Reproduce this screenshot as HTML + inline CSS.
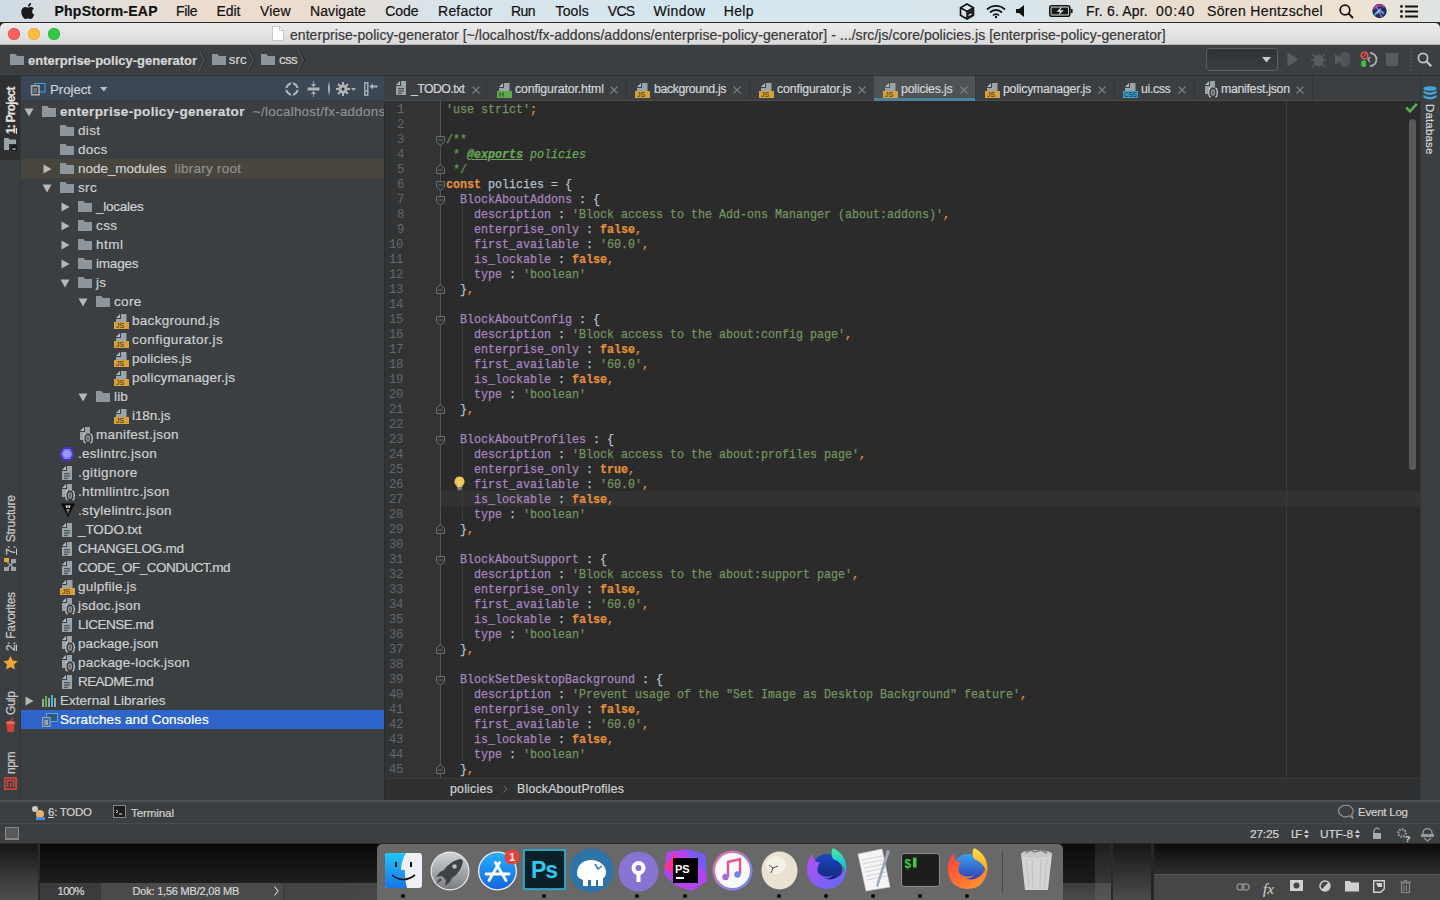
<!DOCTYPE html>
<html><head><meta charset="utf-8">
<style>
*{margin:0;padding:0;box-sizing:border-box}
html,body{width:1440px;height:900px;overflow:hidden;background:#2b2b2b;font-family:"Liberation Sans",sans-serif}
.a{position:absolute;white-space:pre}
svg.a{overflow:visible}
.k{color:#e28e3c;font-weight:bold}
.s{color:#74955f}
.p{color:#a886bf}
.c{color:#69a55a;font-style:italic}
.o{color:#e28e3c}
.d{color:#b4c2d0}
</style></head><body>

<div class="a" style="left:0px;top:0px;width:1440px;height:22px;background:linear-gradient(90deg,#cddbe5 0%,#e2dfdb 7%,#eedccd 15%,#ebdcd0 22%,#d9e3ea 30%,#d5e6ee 50%,#d8e5ea 72%,#e8ddd0 80%,#ecdfcf 88%,#efe3d3 95%,#dde3e4 100%);"></div>
<svg class="a" style="left:21px;top:3px;" width="14" height="16" viewBox="0 0 14 16"><path d="M11.2 8.6c0-2 1.6-2.9 1.7-3-0.9-1.4-2.4-1.6-2.9-1.6-1.2-0.1-2.4 0.7-3 0.7-0.6 0-1.6-0.7-2.6-0.7C3 4 1.7 4.8 1 6.1c-1.4 2.4-0.4 6 1 8 0.7 1 1.4 2 2.5 2 1-0.1 1.4-0.6 2.6-0.6s1.5 0.6 2.6 0.6c1.1 0 1.8-1 2.4-2 0.8-1.1 1.1-2.2 1.1-2.3-0.1 0-2.1-0.8-2.1-3.2zM9.3 2.6c0.5-0.7 0.9-1.6 0.8-2.6-0.8 0-1.8 0.5-2.3 1.2-0.5 0.6-1 1.5-0.8 2.5 0.9 0.1 1.8-0.4 2.3-1.1z" fill="#1a1a1a"/></svg>
<div class="a" style="left:54.5px;top:4.15px;font-size:14px;line-height:14px;color:#111;font-family:'Liberation Sans',sans-serif;letter-spacing:0.242px;font-weight:bold;-webkit-text-stroke:0.2px currentColor;">PhpStorm-EAP</div>
<div class="a" style="left:176.0px;top:4.15px;font-size:14px;line-height:14px;color:#111;font-family:'Liberation Sans',sans-serif;letter-spacing:-0.353px;-webkit-text-stroke:0.2px currentColor;">File</div>
<div class="a" style="left:216.5px;top:4.15px;font-size:14px;line-height:14px;color:#111;font-family:'Liberation Sans',sans-serif;letter-spacing:-0.042px;-webkit-text-stroke:0.2px currentColor;">Edit</div>
<div class="a" style="left:260.0px;top:4.15px;font-size:14px;line-height:14px;color:#111;font-family:'Liberation Sans',sans-serif;letter-spacing:0.136px;-webkit-text-stroke:0.2px currentColor;">View</div>
<div class="a" style="left:310.0px;top:4.15px;font-size:14px;line-height:14px;color:#111;font-family:'Liberation Sans',sans-serif;letter-spacing:0.092px;-webkit-text-stroke:0.2px currentColor;">Navigate</div>
<div class="a" style="left:385.2px;top:4.15px;font-size:14px;line-height:14px;color:#111;font-family:'Liberation Sans',sans-serif;letter-spacing:-0.023px;-webkit-text-stroke:0.2px currentColor;">Code</div>
<div class="a" style="left:438.1px;top:4.15px;font-size:14px;line-height:14px;color:#111;font-family:'Liberation Sans',sans-serif;letter-spacing:0.184px;-webkit-text-stroke:0.2px currentColor;">Refactor</div>
<div class="a" style="left:511.1px;top:4.15px;font-size:14px;line-height:14px;color:#111;font-family:'Liberation Sans',sans-serif;letter-spacing:-0.592px;-webkit-text-stroke:0.2px currentColor;">Run</div>
<div class="a" style="left:555.5px;top:4.15px;font-size:14px;line-height:14px;color:#111;font-family:'Liberation Sans',sans-serif;letter-spacing:0.154px;-webkit-text-stroke:0.2px currentColor;">Tools</div>
<div class="a" style="left:607.8px;top:4.15px;font-size:14px;line-height:14px;color:#111;font-family:'Liberation Sans',sans-serif;letter-spacing:-0.694px;-webkit-text-stroke:0.2px currentColor;">VCS</div>
<div class="a" style="left:653.5px;top:4.15px;font-size:14px;line-height:14px;color:#111;font-family:'Liberation Sans',sans-serif;letter-spacing:0.381px;-webkit-text-stroke:0.2px currentColor;">Window</div>
<div class="a" style="left:723.8px;top:4.15px;font-size:14px;line-height:14px;color:#111;font-family:'Liberation Sans',sans-serif;letter-spacing:0.302px;-webkit-text-stroke:0.2px currentColor;">Help</div>
<div class="a" style="left:1086px;top:4.15px;font-size:14px;line-height:14px;color:#111;font-family:'Liberation Sans',sans-serif;letter-spacing:0.178px;-webkit-text-stroke:0.2px currentColor;">Fr. 6. Apr.</div>
<div class="a" style="left:1156px;top:4.15px;font-size:14px;line-height:14px;color:#111;font-family:'Liberation Sans',sans-serif;letter-spacing:0.816px;-webkit-text-stroke:0.2px currentColor;">00:40</div>
<div class="a" style="left:1207px;top:4.15px;font-size:14px;line-height:14px;color:#111;font-family:'Liberation Sans',sans-serif;letter-spacing:0.346px;-webkit-text-stroke:0.2px currentColor;">Sören Hentzschel</div>
<svg class="a" style="left:959px;top:3px;" width="16" height="17" viewBox="0 0 16 17"><path d="M8 1l6.5 3.7v7.6L8 16l-6.5-3.7V4.7z" fill="none" stroke="#111" stroke-width="1.6"/><path d="M1.5 4.7L8 8.4l6.5-3.7M8 8.4V16" fill="none" stroke="#111" stroke-width="1.6"/><path d="M8 8.4l6.5-3.7v7.6L8 16z" fill="#222"/><path d="M9.5 12.5l3-1.6" stroke="#d8e6ec" stroke-width="1.2"/></svg>
<svg class="a" style="left:986px;top:4px;" width="20" height="14" viewBox="0 0 20 14"><path d="M1 5.5a13 13 0 0 1 18 0" fill="none" stroke="#111" stroke-width="1.8"/><path d="M4 8.5a8.5 8.5 0 0 1 12 0" fill="none" stroke="#111" stroke-width="1.8"/><path d="M7 11.5a4 4 0 0 1 6 0" fill="none" stroke="#111" stroke-width="1.8"/><circle cx="10" cy="13" r="1.2" fill="#111"/></svg>
<svg class="a" style="left:1016px;top:5px;" width="10" height="12" viewBox="0 0 10 12"><path d="M0 4h3l5-4v12l-5-4h-3z" fill="#111"/></svg>
<svg class="a" style="left:1049px;top:5px;" width="24" height="12" viewBox="0 0 24 12"><rect x="0.8" y="0.8" width="20" height="10.4" rx="2" fill="none" stroke="#111" stroke-width="1.6"/><rect x="21.8" y="4" width="1.8" height="4" fill="#111"/><rect x="2.5" y="2.5" width="16.6" height="7" fill="#1a1a1a"/><path d="M12.5 1.8l-5 5h3.5l-1.5 3.6l5.2-5.2h-3.5l1.8-3.4z" fill="#d8e6ec"/></svg>
<svg class="a" style="left:1339px;top:4px;" width="15" height="15" viewBox="0 0 15 15"><circle cx="6" cy="6" r="4.8" fill="none" stroke="#111" stroke-width="1.7"/><path d="M9.5 9.5l4.5 4.5" stroke="#111" stroke-width="1.9"/></svg>
<svg class="a" style="left:1371px;top:2px;" width="17" height="17" viewBox="0 0 17 17"><circle cx="8.5" cy="9" r="8" fill="#fbf3e8"/><circle cx="8.5" cy="9" r="7.2" fill="#1c2040"/><path d="M2.5 7Q7 1 13.5 5" stroke="#e040b0" stroke-width="2.2" fill="none" opacity="0.9"/><path d="M3.5 13.5Q8 5 13 12" stroke="#50e0d0" stroke-width="1.6" fill="none"/><path d="M5 4.5Q9 9 10.5 15" stroke="#f070c8" stroke-width="1.3" fill="none"/><path d="M6 12L9.5 6.5" stroke="#e8f8ff" stroke-width="1.2"/><circle cx="8.5" cy="9" r="7.2" fill="#3050c0" opacity="0.25"/></svg>
<svg class="a" style="left:1400px;top:5px;" width="18" height="13" viewBox="0 0 18 13"><circle cx="1.5" cy="1.5" r="1.4" fill="#111"/><circle cx="1.5" cy="6.5" r="1.4" fill="#111"/><circle cx="1.5" cy="11.5" r="1.4" fill="#111"/><rect x="5" y="0.5" width="13" height="2" fill="#111"/><rect x="5" y="5.5" width="13" height="2" fill="#111"/><rect x="5" y="10.5" width="13" height="2" fill="#111"/></svg>
<div class="a" style="left:0px;top:22px;width:1440px;height:1px;background:#2a2a2a;"></div>
<div class="a" style="left:0px;top:23px;width:1440px;height:22px;background:linear-gradient(#ececec,#d9d9d9);border-radius:5px 5px 0 0"></div>
<div class="a" style="left:0px;top:44px;width:1440px;height:1px;background:#b9b9b9;"></div>
<div class="a" style="left:8px;top:28px;width:12px;height:12px;background:#fc605c;border-radius:50%;box-shadow:inset 0 0 0 0.5px #e0443e"></div>
<div class="a" style="left:28px;top:28px;width:12px;height:12px;background:#fdbc40;border-radius:50%;box-shadow:inset 0 0 0 0.5px #dea123"></div>
<div class="a" style="left:48px;top:28px;width:12px;height:12px;background:#34c84a;border-radius:50%;box-shadow:inset 0 0 0 0.5px #1dad2b"></div>
<svg class="a" style="left:272px;top:26px;" width="12" height="15" viewBox="0 0 12 15"><path d="M0.5 0.5h7l4 4v10h-11z" fill="#fff" stroke="#c8c8c8"/><path d="M7.5 0.5v4h4" fill="none" stroke="#c8c8c8"/></svg>
<div class="a" style="left:290px;top:27.65px;font-size:14px;line-height:14px;color:#383838;font-family:'Liberation Sans',sans-serif;letter-spacing:0.053px;-webkit-text-stroke:0.2px currentColor;">enterprise-policy-generator [~/localhost/fx-addons/addons/enterprise-policy-generator] - .../src/js/core/policies.js [enterprise-policy-generator]</div>
<div class="a" style="left:0px;top:45px;width:1440px;height:31px;background:#3c3f41;"></div>
<div class="a" style="left:0px;top:75px;width:1440px;height:1px;background:#2f3133;"></div>
<svg class="a" style="left:10px;top:54px;" width="15" height="12" viewBox="0 0 15 12"><path d="M0 0h5.5l1.5 2h7v9h-14z" fill="#8d969c"/></svg>
<div class="a" style="left:28px;top:53.50px;font-size:13px;line-height:13px;color:#d6d6d6;font-family:'Liberation Sans',sans-serif;letter-spacing:-0.002px;font-weight:bold;-webkit-text-stroke:0.2px currentColor;">enterprise-policy-generator</div>
<svg class="a" style="left:199px;top:50px;" width="6" height="20" viewBox="0 0 6 20"><path d="M1.5 0.5l5 9.5l-5 9.5" fill="none" stroke="#26282a" stroke-width="1.2"/><path d="M0.5 0.5l5 9.5l-5 9.5" fill="none" stroke="#5c6063" stroke-width="1"/></svg>
<svg class="a" style="left:212px;top:54px;" width="15" height="12" viewBox="0 0 15 12"><path d="M0 0h5.5l1.5 2h7v9h-14z" fill="#8d969c"/></svg>
<div class="a" style="left:228.7px;top:53.24px;font-size:13.3px;line-height:13.3px;color:#d6d6d6;font-family:'Liberation Sans',sans-serif;letter-spacing:0.135px;-webkit-text-stroke:0.2px currentColor;">src</div>
<svg class="a" style="left:248px;top:50px;" width="6" height="20" viewBox="0 0 6 20"><path d="M1.5 0.5l5 9.5l-5 9.5" fill="none" stroke="#26282a" stroke-width="1.2"/><path d="M0.5 0.5l5 9.5l-5 9.5" fill="none" stroke="#5c6063" stroke-width="1"/></svg>
<svg class="a" style="left:261px;top:54px;" width="15" height="12" viewBox="0 0 15 12"><path d="M0 0h5.5l1.5 2h7v9h-14z" fill="#8d969c"/></svg>
<div class="a" style="left:279px;top:53.24px;font-size:13.3px;line-height:13.3px;color:#d6d6d6;font-family:'Liberation Sans',sans-serif;letter-spacing:-0.625px;-webkit-text-stroke:0.2px currentColor;">css</div>
<svg class="a" style="left:298px;top:50px;" width="6" height="20" viewBox="0 0 6 20"><path d="M1.5 0.5l5 9.5l-5 9.5" fill="none" stroke="#26282a" stroke-width="1.2"/><path d="M0.5 0.5l5 9.5l-5 9.5" fill="none" stroke="#5c6063" stroke-width="1"/></svg>
<div class="a" style="left:1206px;top:48px;width:72px;height:23px;background:linear-gradient(#2f3133,#3b3e40);border:1px solid #5c5f62;border-radius:4px"></div>
<svg class="a" style="left:1262px;top:57px;" width="10" height="6" viewBox="0 0 10 6"><path d="M0 0h9l-4.5 5.5z" fill="#c8c8c8"/></svg>
<svg class="a" style="left:1287px;top:51px;" width="12" height="17" viewBox="0 0 12 17"><path d="M0.5 1.5l11 7l-11 7z" fill="#595c5e"/></svg>
<svg class="a" style="left:1311px;top:51px;" width="15" height="17" viewBox="0 0 15 17"><ellipse cx="7.5" cy="9.5" rx="5" ry="6" fill="#595c5e"/><path d="M1 3l3 3M14 3l-3 3M0 9h3M12 9h3M1 16l3-3M14 16l-3-3" stroke="#595c5e" stroke-width="1.3"/></svg>
<svg class="a" style="left:1335px;top:52px;" width="15" height="15" viewBox="0 0 15 15"><path d="M0 2l8 5.5l-8 5.5z" fill="#595c5e"/><rect x="5" y="0" width="10" height="15" fill="#595c5e" opacity="0.7" rx="5"/></svg>
<svg class="a" style="left:1360px;top:51px;" width="17" height="17" viewBox="0 0 17 17"><circle cx="4.5" cy="4.5" r="3.3" fill="none" stroke="#e0574f" stroke-width="1.5"/><path d="M2.5 6.5l4-4" stroke="#e0574f" stroke-width="1.3"/><path d="M1 12a3 3 0 0 1 5-2v5a3 3 0 0 1-5-3z" fill="#3ac24b"/><path d="M10 2a6 6 0 0 1 0 13" fill="none" stroke="#aaa" stroke-width="2"/><path d="M10 6l-2 2.5l2 2.5" fill="none" stroke="#aaa" stroke-width="1.5"/></svg>
<div class="a" style="left:1386px;top:53px;width:12px;height:13px;background:#595c5e;"></div>
<svg class="a" style="left:1410px;top:48px;" width="2" height="24" viewBox="0 0 2 24"><path d="M1 0v24" stroke="#6a6d6f" stroke-width="1" stroke-dasharray="1.5 2"/></svg>
<svg class="a" style="left:1417px;top:52px;" width="16" height="16" viewBox="0 0 16 16"><circle cx="6" cy="6" r="4.6" fill="none" stroke="#c2c2c2" stroke-width="1.8"/><path d="M9.3 9.3l5 5" stroke="#c2c2c2" stroke-width="2.3"/></svg>
<div class="a" style="left:0px;top:76px;width:20px;height:724px;background:#3c3f41;"></div>
<div class="a" style="left:20px;top:76px;width:1px;height:724px;background:#323436;"></div>
<div class="a" style="left:0px;top:76px;width:20px;height:84px;background:#2e3032;"></div>
<div class="a" style="left:5px;top:133.5px;transform-origin:0 0;transform:rotate(-90deg);font-size:12px;line-height:12px;color:#e0e0e0;letter-spacing:-0.799px;-webkit-text-stroke:0.2px currentColor"><b><u>1</u>: Project</b></div>
<svg class="a" style="left:4px;top:138px;" width="13" height="13" viewBox="0 0 13 13"><path d="M0 0h5v1.5h7v4.5H5v6H0z" fill="#9aa4ab"/><rect x="7" y="7" width="6" height="6" fill="#1b1b1b"/><rect x="8.5" y="10.5" width="3" height="1.2" fill="#ddd"/></svg>
<div class="a" style="left:5px;top:555px;transform-origin:0 0;transform:rotate(-90deg);font-size:12px;line-height:12px;color:#c8c8c8;letter-spacing:-0.184px;-webkit-text-stroke:0.2px currentColor"><u>7</u>: Structure</div>
<svg class="a" style="left:4px;top:558px;" width="13" height="14" viewBox="0 0 13 14"><rect x="0" y="0" width="5" height="4" fill="#e3a83a"/><rect x="7" y="1" width="5" height="4" fill="#9aa4ab"/><rect x="0" y="9" width="5" height="4" fill="#9aa4ab"/><rect x="7" y="9" width="5" height="4" fill="#9aa4ab"/><path d="M3 4l7 6M10 4l-7 6" stroke="#9aa4ab" stroke-width="1.2"/></svg>
<div class="a" style="left:5px;top:651px;transform-origin:0 0;transform:rotate(-90deg);font-size:12px;line-height:12px;color:#c8c8c8;letter-spacing:-0.336px;-webkit-text-stroke:0.2px currentColor"><u>2</u>: Favorites</div>
<svg class="a" style="left:3px;top:656px;" width="15" height="14" viewBox="0 0 15 14"><path d="M7.5 0l2.2 4.6l5 0.6l-3.7 3.4l1 5l-4.5-2.5l-4.5 2.5l1-5l-3.7-3.4l5-0.6z" fill="#f0a732"/></svg>
<div class="a" style="left:5px;top:715px;transform-origin:0 0;transform:rotate(-90deg);font-size:12px;line-height:12px;color:#c8c8c8;letter-spacing:-0.449px;-webkit-text-stroke:0.2px currentColor">Gulp</div>
<svg class="a" style="left:5px;top:718px;" width="11" height="15" viewBox="0 0 11 15"><path d="M1 4h9l-1.5 10h-6z" fill="#d8403a"/><path d="M5 4l3-4" stroke="#d8403a" stroke-width="1.2"/><ellipse cx="5.5" cy="4.5" rx="4.5" ry="1.5" fill="#e86a64"/></svg>
<div class="a" style="left:5px;top:773.5px;transform-origin:0 0;transform:rotate(-90deg);font-size:12px;line-height:12px;color:#c8c8c8;letter-spacing:-0.372px;-webkit-text-stroke:0.2px currentColor">npm</div>
<svg class="a" style="left:4px;top:777px;" width="13" height="13" viewBox="0 0 13 13"><rect x="0.9" y="0.9" width="11.2" height="11.2" fill="none" stroke="#c9473a" stroke-width="1.8"/><path d="M3.5 10V3.5h6V10M6.5 6v4" fill="none" stroke="#c9473a" stroke-width="1.6"/></svg>
<div class="a" style="left:21px;top:76px;width:363px;height:724px;background:#3c3f41;"></div>
<div class="a" style="left:21px;top:76px;width:363px;height:25px;background:#3b4755;"></div>
<div class="a" style="left:21px;top:100px;width:363px;height:1px;background:#343c45;"></div>
<svg class="a" style="left:30px;top:82px;" width="16" height="14" viewBox="0 0 16 14"><rect x="4.5" y="1.5" width="10.5" height="8.5" fill="#2c4a66" stroke="#4aa0d8" stroke-width="1"/><rect x="1.6" y="3.8" width="7.4" height="9" fill="#3b4755" stroke="#a8a8a8" stroke-width="1.6"/><rect x="3.5" y="6" width="3.5" height="5" fill="#707478"/></svg>
<div class="a" style="left:50px;top:82.74px;font-size:13.3px;line-height:13.3px;color:#cdd1d5;font-family:'Liberation Sans',sans-serif;letter-spacing:-0.066px;-webkit-text-stroke:0.2px currentColor;">Project</div>
<svg class="a" style="left:100px;top:87px;" width="8" height="5" viewBox="0 0 8 5"><path d="M0 0h7.5l-3.75 4.5z" fill="#bcbcbc"/></svg>
<svg class="a" style="left:285px;top:82px;" width="14" height="14" viewBox="0 0 14 14"><circle cx="7" cy="7" r="5.6" fill="none" stroke="#b0b3b6" stroke-width="2.2"/><rect x="6" y="0.5" width="2" height="3.5" fill="#3b4755"/><rect x="6" y="10" width="2" height="3.5" fill="#3b4755"/><rect x="0.5" y="6" width="3.5" height="2" fill="#3b4755"/><rect x="10" y="6" width="3.5" height="2" fill="#3b4755"/></svg>
<svg class="a" style="left:307px;top:81px;" width="13" height="16" viewBox="0 0 13 16"><rect x="0.5" y="6.5" width="12" height="3" fill="#b0b3b6"/><path d="M6.5 0v3M4.5 3.5h4l-2 2z" fill="#b0b3b6" stroke="#b0b3b6" stroke-width="0.8"/><path d="M6.5 16v-3M4.5 12.5h4l-2-2z" fill="#b0b3b6" stroke="#b0b3b6" stroke-width="0.8"/></svg>
<div class="a" style="left:328px;top:81px;width:1.5px;height:15px;background:linear-gradient(#3b4755,#aab0b5 40%,#aab0b5 60%,#3b4755);"></div>
<svg class="a" style="left:336px;top:82px;" width="20" height="14" viewBox="0 0 20 14"><rect x="6" y="0" width="2" height="14" fill="#b0b3b6" transform="rotate(0 7 7)"/><rect x="6" y="0" width="2" height="14" fill="#b0b3b6" transform="rotate(45 7 7)"/><rect x="6" y="0" width="2" height="14" fill="#b0b3b6" transform="rotate(90 7 7)"/><rect x="6" y="0" width="2" height="14" fill="#b0b3b6" transform="rotate(135 7 7)"/><circle cx="7" cy="7" r="4.6" fill="#b0b3b6"/><circle cx="7" cy="7" r="1.5" fill="#2a3038"/><path d="M15 6h5l-2.5 3z" fill="#b0b3b6"/></svg>
<svg class="a" style="left:364px;top:82px;" width="14" height="14" viewBox="0 0 14 14"><rect x="0.8" y="0.8" width="3" height="12.4" fill="none" stroke="#b0b3b6" stroke-width="1.4"/><rect x="1.8" y="8" width="1" height="2" fill="#b0b3b6"/><path d="M13.5 4.5H8" stroke="#b0b3b6" stroke-width="2"/><path d="M5.5 4.5l3.5-3v6z" fill="#b0b3b6"/></svg>
<svg class="a" style="left:24px;top:108px;" width="10" height="9" viewBox="0 0 10 9"><path d="M0.5 0.5h9l-4.5 8z" fill="#b8b8b8"/></svg>
<svg class="a" style="left:42px;top:106px;" width="15" height="12" viewBox="0 0 15 12"><path d="M0 0h5.5l1.5 2h7v9h-14z" fill="#8d969c"/></svg>
<div class="a" style="left:60px;top:104.57px;font-size:13.5px;line-height:13.5px;color:#d2d4d6;font-family:'Liberation Sans',sans-serif;letter-spacing:0.34px;font-weight:bold;-webkit-text-stroke:0.2px currentColor;">enterprise-policy-generator</div>
<div class="a" style="left:253px;top:104.74px;font-size:13.3px;line-height:13.3px;color:#8e9194;font-family:'Liberation Sans',sans-serif;letter-spacing:0.3px;-webkit-text-stroke:0.2px currentColor;">~/localhost/fx-addons/addons</div>
<svg class="a" style="left:60px;top:125px;" width="15" height="12" viewBox="0 0 15 12"><path d="M0 0h5.5l1.5 2h7v9h-14z" fill="#8d969c"/></svg>
<div class="a" style="left:78px;top:123.57px;font-size:13.5px;line-height:13.5px;color:#cdd0d2;font-family:'Liberation Sans',sans-serif;letter-spacing:0.331px;-webkit-text-stroke:0.2px currentColor;">dist</div>
<svg class="a" style="left:60px;top:144px;" width="15" height="12" viewBox="0 0 15 12"><path d="M0 0h5.5l1.5 2h7v9h-14z" fill="#8d969c"/></svg>
<div class="a" style="left:78px;top:142.57px;font-size:13.5px;line-height:13.5px;color:#cdd0d2;font-family:'Liberation Sans',sans-serif;letter-spacing:0.261px;-webkit-text-stroke:0.2px currentColor;">docs</div>
<div class="a" style="left:21px;top:159px;width:363px;height:19px;background:#48453c;"></div>
<svg class="a" style="left:43px;top:164px;" width="9" height="10" viewBox="0 0 9 10"><path d="M0.5 0.5l8 4.5l-8 4.5z" fill="#b8b8b8"/></svg>
<svg class="a" style="left:60px;top:163px;" width="15" height="12" viewBox="0 0 15 12"><path d="M0 0h5.5l1.5 2h7v9h-14z" fill="#8d969c"/></svg>
<div class="a" style="left:78px;top:161.57px;font-size:13.5px;line-height:13.5px;color:#cdd0d2;font-family:'Liberation Sans',sans-serif;letter-spacing:-0.034px;-webkit-text-stroke:0.2px currentColor;">node_modules</div>
<div class="a" style="left:174.4px;top:161.57px;font-size:13.5px;line-height:13.5px;color:#8e9194;font-family:'Liberation Sans',sans-serif;letter-spacing:0.266px;-webkit-text-stroke:0.2px currentColor;">library root</div>
<svg class="a" style="left:42px;top:184px;" width="10" height="9" viewBox="0 0 10 9"><path d="M0.5 0.5h9l-4.5 8z" fill="#b8b8b8"/></svg>
<svg class="a" style="left:60px;top:182px;" width="15" height="12" viewBox="0 0 15 12"><path d="M0 0h5.5l1.5 2h7v9h-14z" fill="#8d969c"/></svg>
<div class="a" style="left:78px;top:180.57px;font-size:13.5px;line-height:13.5px;color:#cdd0d2;font-family:'Liberation Sans',sans-serif;letter-spacing:0.352px;-webkit-text-stroke:0.2px currentColor;">src</div>
<svg class="a" style="left:61px;top:202px;" width="9" height="10" viewBox="0 0 9 10"><path d="M0.5 0.5l8 4.5l-8 4.5z" fill="#b8b8b8"/></svg>
<svg class="a" style="left:78px;top:201px;" width="15" height="12" viewBox="0 0 15 12"><path d="M0 0h5.5l1.5 2h7v9h-14z" fill="#8d969c"/></svg>
<div class="a" style="left:96px;top:199.57px;font-size:13.5px;line-height:13.5px;color:#cdd0d2;font-family:'Liberation Sans',sans-serif;letter-spacing:-0.247px;-webkit-text-stroke:0.2px currentColor;">_locales</div>
<svg class="a" style="left:61px;top:221px;" width="9" height="10" viewBox="0 0 9 10"><path d="M0.5 0.5l8 4.5l-8 4.5z" fill="#b8b8b8"/></svg>
<svg class="a" style="left:78px;top:220px;" width="15" height="12" viewBox="0 0 15 12"><path d="M0 0h5.5l1.5 2h7v9h-14z" fill="#8d969c"/></svg>
<div class="a" style="left:96px;top:218.57px;font-size:13.5px;line-height:13.5px;color:#cdd0d2;font-family:'Liberation Sans',sans-serif;letter-spacing:0.375px;-webkit-text-stroke:0.2px currentColor;">css</div>
<svg class="a" style="left:61px;top:240px;" width="9" height="10" viewBox="0 0 9 10"><path d="M0.5 0.5l8 4.5l-8 4.5z" fill="#b8b8b8"/></svg>
<svg class="a" style="left:78px;top:239px;" width="15" height="12" viewBox="0 0 15 12"><path d="M0 0h5.5l1.5 2h7v9h-14z" fill="#8d969c"/></svg>
<div class="a" style="left:96px;top:237.57px;font-size:13.5px;line-height:13.5px;color:#cdd0d2;font-family:'Liberation Sans',sans-serif;letter-spacing:0.499px;-webkit-text-stroke:0.2px currentColor;">html</div>
<svg class="a" style="left:61px;top:259px;" width="9" height="10" viewBox="0 0 9 10"><path d="M0.5 0.5l8 4.5l-8 4.5z" fill="#b8b8b8"/></svg>
<svg class="a" style="left:78px;top:258px;" width="15" height="12" viewBox="0 0 15 12"><path d="M0 0h5.5l1.5 2h7v9h-14z" fill="#8d969c"/></svg>
<div class="a" style="left:96px;top:256.57px;font-size:13.5px;line-height:13.5px;color:#cdd0d2;font-family:'Liberation Sans',sans-serif;letter-spacing:-0.204px;-webkit-text-stroke:0.2px currentColor;">images</div>
<svg class="a" style="left:60px;top:279px;" width="10" height="9" viewBox="0 0 10 9"><path d="M0.5 0.5h9l-4.5 8z" fill="#b8b8b8"/></svg>
<svg class="a" style="left:78px;top:277px;" width="15" height="12" viewBox="0 0 15 12"><path d="M0 0h5.5l1.5 2h7v9h-14z" fill="#8d969c"/></svg>
<div class="a" style="left:96px;top:275.57px;font-size:13.5px;line-height:13.5px;color:#cdd0d2;font-family:'Liberation Sans',sans-serif;letter-spacing:0.25px;-webkit-text-stroke:0.2px currentColor;">js</div>
<svg class="a" style="left:78px;top:298px;" width="10" height="9" viewBox="0 0 10 9"><path d="M0.5 0.5h9l-4.5 8z" fill="#b8b8b8"/></svg>
<svg class="a" style="left:96px;top:296px;" width="15" height="12" viewBox="0 0 15 12"><path d="M0 0h5.5l1.5 2h7v9h-14z" fill="#8d969c"/></svg>
<div class="a" style="left:114px;top:294.57px;font-size:13.5px;line-height:13.5px;color:#cdd0d2;font-family:'Liberation Sans',sans-serif;letter-spacing:0.312px;-webkit-text-stroke:0.2px currentColor;">core</div>
<svg class="a" style="left:114px;top:314px;" width="15" height="15" viewBox="0 0 15 15"><path d="M7 0H12.5V8H2V5H7Z" fill="#9aa4ab"/><path d="M2 4L6 0V4Z" fill="#b4bcc1"/><rect x="0" y="8" width="15" height="7" fill="#d7a23b"/><text x="2" y="14.3" font-family="Liberation Sans" font-size="7" fill="#3a2c10">JS</text></svg>
<div class="a" style="left:132px;top:313.57px;font-size:13.5px;line-height:13.5px;color:#cdd0d2;font-family:'Liberation Sans',sans-serif;letter-spacing:0.295px;-webkit-text-stroke:0.2px currentColor;">background.js</div>
<svg class="a" style="left:114px;top:333px;" width="15" height="15" viewBox="0 0 15 15"><path d="M7 0H12.5V8H2V5H7Z" fill="#9aa4ab"/><path d="M2 4L6 0V4Z" fill="#b4bcc1"/><rect x="0" y="8" width="15" height="7" fill="#d7a23b"/><text x="2" y="14.3" font-family="Liberation Sans" font-size="7" fill="#3a2c10">JS</text></svg>
<div class="a" style="left:132px;top:332.57px;font-size:13.5px;line-height:13.5px;color:#cdd0d2;font-family:'Liberation Sans',sans-serif;letter-spacing:0.475px;-webkit-text-stroke:0.2px currentColor;">configurator.js</div>
<svg class="a" style="left:114px;top:352px;" width="15" height="15" viewBox="0 0 15 15"><path d="M7 0H12.5V8H2V5H7Z" fill="#9aa4ab"/><path d="M2 4L6 0V4Z" fill="#b4bcc1"/><rect x="0" y="8" width="15" height="7" fill="#d7a23b"/><text x="2" y="14.3" font-family="Liberation Sans" font-size="7" fill="#3a2c10">JS</text></svg>
<div class="a" style="left:132px;top:351.57px;font-size:13.5px;line-height:13.5px;color:#cdd0d2;font-family:'Liberation Sans',sans-serif;letter-spacing:0.108px;-webkit-text-stroke:0.2px currentColor;">policies.js</div>
<svg class="a" style="left:114px;top:371px;" width="15" height="15" viewBox="0 0 15 15"><path d="M7 0H12.5V8H2V5H7Z" fill="#9aa4ab"/><path d="M2 4L6 0V4Z" fill="#b4bcc1"/><rect x="0" y="8" width="15" height="7" fill="#d7a23b"/><text x="2" y="14.3" font-family="Liberation Sans" font-size="7" fill="#3a2c10">JS</text></svg>
<div class="a" style="left:132px;top:370.57px;font-size:13.5px;line-height:13.5px;color:#cdd0d2;font-family:'Liberation Sans',sans-serif;letter-spacing:0.156px;-webkit-text-stroke:0.2px currentColor;">policymanager.js</div>
<svg class="a" style="left:78px;top:393px;" width="10" height="9" viewBox="0 0 10 9"><path d="M0.5 0.5h9l-4.5 8z" fill="#b8b8b8"/></svg>
<svg class="a" style="left:96px;top:391px;" width="15" height="12" viewBox="0 0 15 12"><path d="M0 0h5.5l1.5 2h7v9h-14z" fill="#8d969c"/></svg>
<div class="a" style="left:114px;top:389.57px;font-size:13.5px;line-height:13.5px;color:#cdd0d2;font-family:'Liberation Sans',sans-serif;letter-spacing:0.146px;-webkit-text-stroke:0.2px currentColor;">lib</div>
<svg class="a" style="left:114px;top:409px;" width="15" height="15" viewBox="0 0 15 15"><path d="M7 0H12.5V8H2V5H7Z" fill="#9aa4ab"/><path d="M2 4L6 0V4Z" fill="#b4bcc1"/><rect x="0" y="8" width="15" height="7" fill="#d7a23b"/><text x="2" y="14.3" font-family="Liberation Sans" font-size="7" fill="#3a2c10">JS</text></svg>
<div class="a" style="left:132px;top:408.57px;font-size:13.5px;line-height:13.5px;color:#cdd0d2;font-family:'Liberation Sans',sans-serif;letter-spacing:-0.104px;-webkit-text-stroke:0.2px currentColor;">i18n.js</div>
<svg class="a" style="left:79px;top:427px;" width="15" height="17" viewBox="0 0 15 17"><path d="M6 0H11V13H1V5H6Z" fill="#9aa4ab"/><path d="M1 4L5 0V4Z" fill="#b4bcc1"/><ellipse cx="9" cy="11.5" rx="5.2" ry="5" fill="#3c3f41"/><path d="M6.8 7q-1.8 0-1.8 1.8v1.4q0 1.3-1.1 1.3q1.1 0 1.1 1.3v1.4q0 1.8 1.8 1.8M11.2 7q1.8 0 1.8 1.8v1.4q0 1.3 1.1 1.3q-1.1 0-1.1 1.3v1.4q0 1.8-1.8 1.8" fill="none" stroke="#d8dcdf" stroke-width="1.1"/><path d="M8.2 8.5q-1 3 0 6M9.8 8.5q1 3 0 6" fill="none" stroke="#d8dcdf" stroke-width="0.9"/></svg>
<div class="a" style="left:96px;top:427.57px;font-size:13.5px;line-height:13.5px;color:#cdd0d2;font-family:'Liberation Sans',sans-serif;letter-spacing:0.238px;-webkit-text-stroke:0.2px currentColor;">manifest.json</div>
<svg class="a" style="left:60px;top:447px;" width="14" height="14" viewBox="0 0 14 14"><path d="M3.5 1h7l3.2 6l-3.2 6h-7L0.3 7z" fill="#8080f2" stroke="#4b32c3" stroke-width="2"/><path d="M5 4h4l2 3l-2 3H5L3 7z" fill="#9a9af8"/></svg>
<div class="a" style="left:78px;top:446.57px;font-size:13.5px;line-height:13.5px;color:#cdd0d2;font-family:'Liberation Sans',sans-serif;letter-spacing:0.282px;-webkit-text-stroke:0.2px currentColor;">.eslintrc.json</div>
<svg class="a" style="left:61px;top:466px;" width="13" height="14" viewBox="0 0 13 14"><path d="M6 0H11V14H1V5H6Z" fill="#9aa4ab"/><path d="M1 4L5 0V4Z" fill="#b4bcc1"/><rect x="3" y="7" width="6" height="1.3" fill="#50565a"/><rect x="3" y="9.4" width="6" height="1.3" fill="#50565a"/><rect x="3" y="11.8" width="4" height="1.3" fill="#50565a"/></svg>
<div class="a" style="left:78px;top:465.57px;font-size:13.5px;line-height:13.5px;color:#cdd0d2;font-family:'Liberation Sans',sans-serif;letter-spacing:0.418px;-webkit-text-stroke:0.2px currentColor;">.gitignore</div>
<svg class="a" style="left:61px;top:484px;" width="15" height="17" viewBox="0 0 15 17"><path d="M6 0H11V13H1V5H6Z" fill="#9aa4ab"/><path d="M1 4L5 0V4Z" fill="#b4bcc1"/><ellipse cx="9" cy="11.5" rx="5.2" ry="5" fill="#3c3f41"/><path d="M6.8 7q-1.8 0-1.8 1.8v1.4q0 1.3-1.1 1.3q1.1 0 1.1 1.3v1.4q0 1.8 1.8 1.8M11.2 7q1.8 0 1.8 1.8v1.4q0 1.3 1.1 1.3q-1.1 0-1.1 1.3v1.4q0 1.8-1.8 1.8" fill="none" stroke="#d8dcdf" stroke-width="1.1"/><path d="M8.2 8.5q-1 3 0 6M9.8 8.5q1 3 0 6" fill="none" stroke="#d8dcdf" stroke-width="0.9"/></svg>
<div class="a" style="left:78px;top:484.57px;font-size:13.5px;line-height:13.5px;color:#cdd0d2;font-family:'Liberation Sans',sans-serif;letter-spacing:0.335px;-webkit-text-stroke:0.2px currentColor;">.htmllintrc.json</div>
<svg class="a" style="left:61px;top:503px;" width="14" height="15" viewBox="0 0 14 15"><path d="M0 0.5h14l-2.5 5l-4.5 9l-4.5-9z" fill="#0b0b0b"/><path d="M4.5 2.5h5l-2.5 9z" fill="#f2f2f2"/><path d="M5 5.5h4M7 3v8" stroke="#0b0b0b" stroke-width="1"/></svg>
<div class="a" style="left:78px;top:503.57px;font-size:13.5px;line-height:13.5px;color:#cdd0d2;font-family:'Liberation Sans',sans-serif;letter-spacing:0.317px;-webkit-text-stroke:0.2px currentColor;">.stylelintrc.json</div>
<svg class="a" style="left:61px;top:523px;" width="13" height="14" viewBox="0 0 13 14"><path d="M6 0H11V14H1V5H6Z" fill="#9aa4ab"/><path d="M1 4L5 0V4Z" fill="#b4bcc1"/><rect x="3" y="7" width="6" height="1.3" fill="#50565a"/><rect x="3" y="9.4" width="6" height="1.3" fill="#50565a"/><rect x="3" y="11.8" width="4" height="1.3" fill="#50565a"/></svg>
<div class="a" style="left:78px;top:522.57px;font-size:13.5px;line-height:13.5px;color:#cdd0d2;font-family:'Liberation Sans',sans-serif;letter-spacing:-0.07px;-webkit-text-stroke:0.2px currentColor;">_TODO.txt</div>
<svg class="a" style="left:61px;top:542px;" width="13" height="14" viewBox="0 0 13 14"><path d="M6 0H11V14H1V5H6Z" fill="#9aa4ab"/><path d="M1 4L5 0V4Z" fill="#b4bcc1"/><rect x="3" y="7" width="6" height="1.3" fill="#50565a"/><rect x="3" y="9.4" width="6" height="1.3" fill="#50565a"/><rect x="3" y="11.8" width="4" height="1.3" fill="#50565a"/></svg>
<div class="a" style="left:78px;top:541.57px;font-size:13.5px;line-height:13.5px;color:#cdd0d2;font-family:'Liberation Sans',sans-serif;letter-spacing:-0.261px;-webkit-text-stroke:0.2px currentColor;">CHANGELOG.md</div>
<svg class="a" style="left:61px;top:561px;" width="13" height="14" viewBox="0 0 13 14"><path d="M6 0H11V14H1V5H6Z" fill="#9aa4ab"/><path d="M1 4L5 0V4Z" fill="#b4bcc1"/><rect x="3" y="7" width="6" height="1.3" fill="#50565a"/><rect x="3" y="9.4" width="6" height="1.3" fill="#50565a"/><rect x="3" y="11.8" width="4" height="1.3" fill="#50565a"/></svg>
<div class="a" style="left:78px;top:560.57px;font-size:13.5px;line-height:13.5px;color:#cdd0d2;font-family:'Liberation Sans',sans-serif;letter-spacing:-0.51px;-webkit-text-stroke:0.2px currentColor;">CODE_OF_CONDUCT.md</div>
<svg class="a" style="left:60px;top:580px;" width="15" height="15" viewBox="0 0 15 15"><path d="M7 0H12.5V8H2V5H7Z" fill="#9aa4ab"/><path d="M2 4L6 0V4Z" fill="#b4bcc1"/><rect x="0" y="8" width="15" height="7" fill="#d7a23b"/><text x="2" y="14.3" font-family="Liberation Sans" font-size="7" fill="#3a2c10">JS</text></svg>
<div class="a" style="left:78px;top:579.57px;font-size:13.5px;line-height:13.5px;color:#cdd0d2;font-family:'Liberation Sans',sans-serif;letter-spacing:0.232px;-webkit-text-stroke:0.2px currentColor;">gulpfile.js</div>
<svg class="a" style="left:61px;top:598px;" width="15" height="17" viewBox="0 0 15 17"><path d="M6 0H11V13H1V5H6Z" fill="#9aa4ab"/><path d="M1 4L5 0V4Z" fill="#b4bcc1"/><ellipse cx="9" cy="11.5" rx="5.2" ry="5" fill="#3c3f41"/><path d="M6.8 7q-1.8 0-1.8 1.8v1.4q0 1.3-1.1 1.3q1.1 0 1.1 1.3v1.4q0 1.8 1.8 1.8M11.2 7q1.8 0 1.8 1.8v1.4q0 1.3 1.1 1.3q-1.1 0-1.1 1.3v1.4q0 1.8-1.8 1.8" fill="none" stroke="#d8dcdf" stroke-width="1.1"/><path d="M8.2 8.5q-1 3 0 6M9.8 8.5q1 3 0 6" fill="none" stroke="#d8dcdf" stroke-width="0.9"/></svg>
<div class="a" style="left:78px;top:598.57px;font-size:13.5px;line-height:13.5px;color:#cdd0d2;font-family:'Liberation Sans',sans-serif;letter-spacing:0.274px;-webkit-text-stroke:0.2px currentColor;">jsdoc.json</div>
<svg class="a" style="left:61px;top:618px;" width="13" height="14" viewBox="0 0 13 14"><path d="M6 0H11V14H1V5H6Z" fill="#9aa4ab"/><path d="M1 4L5 0V4Z" fill="#b4bcc1"/><rect x="3" y="7" width="6" height="1.3" fill="#50565a"/><rect x="3" y="9.4" width="6" height="1.3" fill="#50565a"/><rect x="3" y="11.8" width="4" height="1.3" fill="#50565a"/></svg>
<div class="a" style="left:78px;top:617.57px;font-size:13.5px;line-height:13.5px;color:#cdd0d2;font-family:'Liberation Sans',sans-serif;letter-spacing:-0.509px;-webkit-text-stroke:0.2px currentColor;">LICENSE.md</div>
<svg class="a" style="left:61px;top:636px;" width="15" height="17" viewBox="0 0 15 17"><path d="M6 0H11V13H1V5H6Z" fill="#9aa4ab"/><path d="M1 4L5 0V4Z" fill="#b4bcc1"/><ellipse cx="9" cy="11.5" rx="5.2" ry="5" fill="#3c3f41"/><path d="M6.8 7q-1.8 0-1.8 1.8v1.4q0 1.3-1.1 1.3q1.1 0 1.1 1.3v1.4q0 1.8 1.8 1.8M11.2 7q1.8 0 1.8 1.8v1.4q0 1.3 1.1 1.3q-1.1 0-1.1 1.3v1.4q0 1.8-1.8 1.8" fill="none" stroke="#d8dcdf" stroke-width="1.1"/><path d="M8.2 8.5q-1 3 0 6M9.8 8.5q1 3 0 6" fill="none" stroke="#d8dcdf" stroke-width="0.9"/></svg>
<div class="a" style="left:78px;top:636.57px;font-size:13.5px;line-height:13.5px;color:#cdd0d2;font-family:'Liberation Sans',sans-serif;letter-spacing:0.067px;-webkit-text-stroke:0.2px currentColor;">package.json</div>
<svg class="a" style="left:61px;top:655px;" width="15" height="17" viewBox="0 0 15 17"><path d="M6 0H11V13H1V5H6Z" fill="#9aa4ab"/><path d="M1 4L5 0V4Z" fill="#b4bcc1"/><ellipse cx="9" cy="11.5" rx="5.2" ry="5" fill="#3c3f41"/><path d="M6.8 7q-1.8 0-1.8 1.8v1.4q0 1.3-1.1 1.3q1.1 0 1.1 1.3v1.4q0 1.8 1.8 1.8M11.2 7q1.8 0 1.8 1.8v1.4q0 1.3 1.1 1.3q-1.1 0-1.1 1.3v1.4q0 1.8-1.8 1.8" fill="none" stroke="#d8dcdf" stroke-width="1.1"/><path d="M8.2 8.5q-1 3 0 6M9.8 8.5q1 3 0 6" fill="none" stroke="#d8dcdf" stroke-width="0.9"/></svg>
<div class="a" style="left:78px;top:655.57px;font-size:13.5px;line-height:13.5px;color:#cdd0d2;font-family:'Liberation Sans',sans-serif;letter-spacing:0.215px;-webkit-text-stroke:0.2px currentColor;">package-lock.json</div>
<svg class="a" style="left:61px;top:675px;" width="13" height="14" viewBox="0 0 13 14"><path d="M6 0H11V14H1V5H6Z" fill="#9aa4ab"/><path d="M1 4L5 0V4Z" fill="#b4bcc1"/><rect x="3" y="7" width="6" height="1.3" fill="#50565a"/><rect x="3" y="9.4" width="6" height="1.3" fill="#50565a"/><rect x="3" y="11.8" width="4" height="1.3" fill="#50565a"/></svg>
<div class="a" style="left:78px;top:674.57px;font-size:13.5px;line-height:13.5px;color:#cdd0d2;font-family:'Liberation Sans',sans-serif;letter-spacing:-0.571px;-webkit-text-stroke:0.2px currentColor;">README.md</div>
<svg class="a" style="left:25px;top:696px;" width="9" height="10" viewBox="0 0 9 10"><path d="M0.5 0.5l8 4.5l-8 4.5z" fill="#b8b8b8"/></svg>
<svg class="a" style="left:42px;top:695px;" width="15" height="12" viewBox="0 0 15 12"><rect x="0" y="4" width="2" height="8" fill="#9aa4ab"/><rect x="3" y="1" width="2" height="11" fill="#62b543"/><rect x="6" y="3" width="2" height="9" fill="#9aa4ab"/><rect x="9" y="0" width="2" height="12" fill="#40b6e0"/><rect x="12" y="3" width="2" height="9" fill="#9aa4ab"/></svg>
<div class="a" style="left:60px;top:693.57px;font-size:13.5px;line-height:13.5px;color:#cdd0d2;font-family:'Liberation Sans',sans-serif;letter-spacing:0.026px;-webkit-text-stroke:0.2px currentColor;">External Libraries</div>
<div class="a" style="left:21px;top:710px;width:363px;height:19px;background:#2f65ca;"></div>
<svg class="a" style="left:42px;top:713px;" width="17" height="14" viewBox="0 0 17 14"><rect x="4.5" y="0.5" width="11" height="8" fill="#2b5a80" stroke="#5aa8d8" stroke-width="1"/><rect x="0.6" y="4.6" width="7.5" height="8.8" fill="#2f65ca" stroke="#a89f90" stroke-width="1.2"/><rect x="2.5" y="7" width="3.5" height="5" fill="#a0a6b0"/></svg>
<div class="a" style="left:60px;top:712.57px;font-size:13.5px;line-height:13.5px;color:#ffffff;font-family:'Liberation Sans',sans-serif;letter-spacing:0.113px;-webkit-text-stroke:0.2px currentColor;">Scratches and Consoles</div>
<div class="a" style="left:384px;top:101px;width:1px;height:677px;background:#2b2b2b;"></div>
<div class="a" style="left:384px;top:76px;width:1036px;height:25px;background:#3c3f41;"></div>
<div class="a" style="left:384px;top:100px;width:1036px;height:1px;background:#4b4b4b;"></div>
<div class="a" style="left:486px;top:76px;width:1px;height:24px;background:#333537;"></div>
<svg class="a" style="left:395px;top:81px;" width="13" height="14" viewBox="0 0 13 14"><path d="M6 0H11V14H1V5H6Z" fill="#9aa4ab"/><path d="M1 4L5 0V4Z" fill="#b4bcc1"/><rect x="3" y="7" width="6" height="1.3" fill="#50565a"/><rect x="3" y="9.4" width="6" height="1.3" fill="#50565a"/><rect x="3" y="11.8" width="4" height="1.3" fill="#50565a"/></svg>
<div class="a" style="left:411px;top:82.59px;font-size:12.3px;line-height:12.3px;color:#d4d6d8;font-family:'Liberation Sans',sans-serif;letter-spacing:-0.569px;-webkit-text-stroke:0.2px currentColor;">_TODO.txt</div>
<svg class="a" style="left:472px;top:86px;" width="8" height="8" viewBox="0 0 8 8"><path d="M0.5 0.5l7 7M7.5 0.5l-7 7" stroke="#7b8084" stroke-width="1.1"/></svg>
<div class="a" style="left:626px;top:76px;width:1px;height:24px;background:#333537;"></div>
<svg class="a" style="left:497px;top:83px;" width="15" height="15" viewBox="0 0 15 15"><path d="M7 0H12.5V8H2V5H7Z" fill="#9aa4ab"/><path d="M2 4L6 0V4Z" fill="#b4bcc1"/><rect x="0" y="8" width="15" height="7" fill="#5fa847"/><text x="2" y="14.3" font-family="Liberation Sans" font-size="7" fill="#123d0f">H</text></svg>
<div class="a" style="left:515px;top:82.59px;font-size:12.3px;line-height:12.3px;color:#d4d6d8;font-family:'Liberation Sans',sans-serif;letter-spacing:-0.121px;-webkit-text-stroke:0.2px currentColor;">configurator.html</div>
<svg class="a" style="left:610px;top:86px;" width="8" height="8" viewBox="0 0 8 8"><path d="M0.5 0.5l7 7M7.5 0.5l-7 7" stroke="#7b8084" stroke-width="1.1"/></svg>
<div class="a" style="left:749px;top:76px;width:1px;height:24px;background:#333537;"></div>
<svg class="a" style="left:635px;top:83px;" width="15" height="15" viewBox="0 0 15 15"><path d="M7 0H12.5V8H2V5H7Z" fill="#9aa4ab"/><path d="M2 4L6 0V4Z" fill="#b4bcc1"/><rect x="0" y="8" width="15" height="7" fill="#d7a23b"/><text x="2" y="14.3" font-family="Liberation Sans" font-size="7" fill="#3a2c10">JS</text></svg>
<div class="a" style="left:654px;top:82.59px;font-size:12.3px;line-height:12.3px;color:#d4d6d8;font-family:'Liberation Sans',sans-serif;letter-spacing:-0.34px;-webkit-text-stroke:0.2px currentColor;">background.js</div>
<svg class="a" style="left:733px;top:86px;" width="8" height="8" viewBox="0 0 8 8"><path d="M0.5 0.5l7 7M7.5 0.5l-7 7" stroke="#7b8084" stroke-width="1.1"/></svg>
<div class="a" style="left:874px;top:76px;width:1px;height:24px;background:#333537;"></div>
<svg class="a" style="left:759px;top:83px;" width="15" height="15" viewBox="0 0 15 15"><path d="M7 0H12.5V8H2V5H7Z" fill="#9aa4ab"/><path d="M2 4L6 0V4Z" fill="#b4bcc1"/><rect x="0" y="8" width="15" height="7" fill="#d7a23b"/><text x="2" y="14.3" font-family="Liberation Sans" font-size="7" fill="#3a2c10">JS</text></svg>
<div class="a" style="left:777px;top:82.59px;font-size:12.3px;line-height:12.3px;color:#d4d6d8;font-family:'Liberation Sans',sans-serif;letter-spacing:-0.148px;-webkit-text-stroke:0.2px currentColor;">configurator.js</div>
<svg class="a" style="left:858px;top:86px;" width="8" height="8" viewBox="0 0 8 8"><path d="M0.5 0.5l7 7M7.5 0.5l-7 7" stroke="#7b8084" stroke-width="1.1"/></svg>
<div class="a" style="left:874px;top:76px;width:101px;height:24px;background:#4e5356;"></div>
<div class="a" style="left:874px;top:98px;width:101px;height:3px;background:#4a8399;"></div>
<div class="a" style="left:975px;top:76px;width:1px;height:24px;background:#333537;"></div>
<svg class="a" style="left:883px;top:83px;" width="15" height="15" viewBox="0 0 15 15"><path d="M7 0H12.5V8H2V5H7Z" fill="#9aa4ab"/><path d="M2 4L6 0V4Z" fill="#b4bcc1"/><rect x="0" y="8" width="15" height="7" fill="#d7a23b"/><text x="2" y="14.3" font-family="Liberation Sans" font-size="7" fill="#3a2c10">JS</text></svg>
<div class="a" style="left:901px;top:82.59px;font-size:12.3px;line-height:12.3px;color:#d4d6d8;font-family:'Liberation Sans',sans-serif;letter-spacing:-0.157px;-webkit-text-stroke:0.2px currentColor;">policies.js</div>
<svg class="a" style="left:960px;top:86px;" width="8" height="8" viewBox="0 0 8 8"><path d="M0.5 0.5l7 7M7.5 0.5l-7 7" stroke="#7b8084" stroke-width="1.1"/></svg>
<div class="a" style="left:1114px;top:76px;width:1px;height:24px;background:#333537;"></div>
<svg class="a" style="left:985px;top:83px;" width="15" height="15" viewBox="0 0 15 15"><path d="M7 0H12.5V8H2V5H7Z" fill="#9aa4ab"/><path d="M2 4L6 0V4Z" fill="#b4bcc1"/><rect x="0" y="8" width="15" height="7" fill="#d7a23b"/><text x="2" y="14.3" font-family="Liberation Sans" font-size="7" fill="#3a2c10">JS</text></svg>
<div class="a" style="left:1003px;top:82.59px;font-size:12.3px;line-height:12.3px;color:#d4d6d8;font-family:'Liberation Sans',sans-serif;letter-spacing:-0.224px;-webkit-text-stroke:0.2px currentColor;">policymanager.js</div>
<svg class="a" style="left:1098px;top:86px;" width="8" height="8" viewBox="0 0 8 8"><path d="M0.5 0.5l7 7M7.5 0.5l-7 7" stroke="#7b8084" stroke-width="1.1"/></svg>
<div class="a" style="left:1194px;top:76px;width:1px;height:24px;background:#333537;"></div>
<svg class="a" style="left:1123px;top:83px;" width="15" height="15" viewBox="0 0 15 15"><path d="M7 0H12.5V8H2V5H7Z" fill="#9aa4ab"/><path d="M2 4L6 0V4Z" fill="#b4bcc1"/><rect x="0" y="8" width="15" height="7" fill="#3b9ecc"/><text x="0.7" y="14.2" font-family="Liberation Sans" font-size="6.8" fill="#0d2b3a" textLength="13.6" lengthAdjust="spacingAndGlyphs">CSS</text></svg>
<div class="a" style="left:1141px;top:82.59px;font-size:12.3px;line-height:12.3px;color:#d4d6d8;font-family:'Liberation Sans',sans-serif;letter-spacing:-0.338px;-webkit-text-stroke:0.2px currentColor;">ui.css</div>
<svg class="a" style="left:1178px;top:86px;" width="8" height="8" viewBox="0 0 8 8"><path d="M0.5 0.5l7 7M7.5 0.5l-7 7" stroke="#7b8084" stroke-width="1.1"/></svg>
<div class="a" style="left:1312px;top:76px;width:1px;height:24px;background:#333537;"></div>
<svg class="a" style="left:1204px;top:81px;" width="15" height="17" viewBox="0 0 15 17"><path d="M6 0H11V13H1V5H6Z" fill="#9aa4ab"/><path d="M1 4L5 0V4Z" fill="#b4bcc1"/><ellipse cx="9" cy="11.5" rx="5.2" ry="5" fill="#3c3f41"/><path d="M6.8 7q-1.8 0-1.8 1.8v1.4q0 1.3-1.1 1.3q1.1 0 1.1 1.3v1.4q0 1.8 1.8 1.8M11.2 7q1.8 0 1.8 1.8v1.4q0 1.3 1.1 1.3q-1.1 0-1.1 1.3v1.4q0 1.8-1.8 1.8" fill="none" stroke="#d8dcdf" stroke-width="1.1"/><path d="M8.2 8.5q-1 3 0 6M9.8 8.5q1 3 0 6" fill="none" stroke="#d8dcdf" stroke-width="0.9"/></svg>
<div class="a" style="left:1221px;top:82.59px;font-size:12.3px;line-height:12.3px;color:#d4d6d8;font-family:'Liberation Sans',sans-serif;letter-spacing:-0.289px;-webkit-text-stroke:0.2px currentColor;">manifest.json</div>
<svg class="a" style="left:1296px;top:86px;" width="8" height="8" viewBox="0 0 8 8"><path d="M0.5 0.5l7 7M7.5 0.5l-7 7" stroke="#7b8084" stroke-width="1.1"/></svg>
<div class="a" style="left:385px;top:101px;width:1035px;height:677px;background:#2b2b2b;"></div>
<div class="a" style="left:385px;top:101px;width:55px;height:677px;background:#313335;"></div>
<div class="a" style="left:440px;top:101px;width:1px;height:677px;background:#505355;"></div>
<div class="a" style="left:441px;top:491px;width:979px;height:15px;background:#323232;"></div>
<div class="a" style="left:1286px;top:101px;width:1px;height:677px;background:#3b3b3b;"></div>
<div class="a" style="left:462px;top:206px;width:1px;height:75px;background:#3b3b3b;"></div>
<div class="a" style="left:462px;top:326px;width:1px;height:75px;background:#3b3b3b;"></div>
<div class="a" style="left:462px;top:446px;width:1px;height:75px;background:#3b3b3b;"></div>
<div class="a" style="left:462px;top:566px;width:1px;height:75px;background:#3b3b3b;"></div>
<div class="a" style="left:462px;top:686px;width:1px;height:75px;background:#3b3b3b;"></div>
<div class="a" style="left:385px;top:103px;width:19px;text-align:right;font-family:'Liberation Mono',monospace;font-size:12.3px;line-height:15px;color:#64676a;height:15px;letter-spacing:-0.4px">1</div>
<div class="a" style="left:385px;top:118px;width:19px;text-align:right;font-family:'Liberation Mono',monospace;font-size:12.3px;line-height:15px;color:#64676a;height:15px;letter-spacing:-0.4px">2</div>
<div class="a" style="left:385px;top:133px;width:19px;text-align:right;font-family:'Liberation Mono',monospace;font-size:12.3px;line-height:15px;color:#64676a;height:15px;letter-spacing:-0.4px">3</div>
<div class="a" style="left:385px;top:148px;width:19px;text-align:right;font-family:'Liberation Mono',monospace;font-size:12.3px;line-height:15px;color:#64676a;height:15px;letter-spacing:-0.4px">4</div>
<div class="a" style="left:385px;top:163px;width:19px;text-align:right;font-family:'Liberation Mono',monospace;font-size:12.3px;line-height:15px;color:#64676a;height:15px;letter-spacing:-0.4px">5</div>
<div class="a" style="left:385px;top:178px;width:19px;text-align:right;font-family:'Liberation Mono',monospace;font-size:12.3px;line-height:15px;color:#64676a;height:15px;letter-spacing:-0.4px">6</div>
<div class="a" style="left:385px;top:193px;width:19px;text-align:right;font-family:'Liberation Mono',monospace;font-size:12.3px;line-height:15px;color:#64676a;height:15px;letter-spacing:-0.4px">7</div>
<div class="a" style="left:385px;top:208px;width:19px;text-align:right;font-family:'Liberation Mono',monospace;font-size:12.3px;line-height:15px;color:#64676a;height:15px;letter-spacing:-0.4px">8</div>
<div class="a" style="left:385px;top:223px;width:19px;text-align:right;font-family:'Liberation Mono',monospace;font-size:12.3px;line-height:15px;color:#64676a;height:15px;letter-spacing:-0.4px">9</div>
<div class="a" style="left:385px;top:238px;width:18px;text-align:right;font-family:'Liberation Mono',monospace;font-size:12.3px;line-height:15px;color:#64676a;height:15px;letter-spacing:-0.4px">10</div>
<div class="a" style="left:385px;top:253px;width:18px;text-align:right;font-family:'Liberation Mono',monospace;font-size:12.3px;line-height:15px;color:#64676a;height:15px;letter-spacing:-0.4px">11</div>
<div class="a" style="left:385px;top:268px;width:18px;text-align:right;font-family:'Liberation Mono',monospace;font-size:12.3px;line-height:15px;color:#64676a;height:15px;letter-spacing:-0.4px">12</div>
<div class="a" style="left:385px;top:283px;width:18px;text-align:right;font-family:'Liberation Mono',monospace;font-size:12.3px;line-height:15px;color:#64676a;height:15px;letter-spacing:-0.4px">13</div>
<div class="a" style="left:385px;top:298px;width:18px;text-align:right;font-family:'Liberation Mono',monospace;font-size:12.3px;line-height:15px;color:#64676a;height:15px;letter-spacing:-0.4px">14</div>
<div class="a" style="left:385px;top:313px;width:18px;text-align:right;font-family:'Liberation Mono',monospace;font-size:12.3px;line-height:15px;color:#64676a;height:15px;letter-spacing:-0.4px">15</div>
<div class="a" style="left:385px;top:328px;width:18px;text-align:right;font-family:'Liberation Mono',monospace;font-size:12.3px;line-height:15px;color:#64676a;height:15px;letter-spacing:-0.4px">16</div>
<div class="a" style="left:385px;top:343px;width:18px;text-align:right;font-family:'Liberation Mono',monospace;font-size:12.3px;line-height:15px;color:#64676a;height:15px;letter-spacing:-0.4px">17</div>
<div class="a" style="left:385px;top:358px;width:18px;text-align:right;font-family:'Liberation Mono',monospace;font-size:12.3px;line-height:15px;color:#64676a;height:15px;letter-spacing:-0.4px">18</div>
<div class="a" style="left:385px;top:373px;width:18px;text-align:right;font-family:'Liberation Mono',monospace;font-size:12.3px;line-height:15px;color:#64676a;height:15px;letter-spacing:-0.4px">19</div>
<div class="a" style="left:385px;top:388px;width:18px;text-align:right;font-family:'Liberation Mono',monospace;font-size:12.3px;line-height:15px;color:#64676a;height:15px;letter-spacing:-0.4px">20</div>
<div class="a" style="left:385px;top:403px;width:18px;text-align:right;font-family:'Liberation Mono',monospace;font-size:12.3px;line-height:15px;color:#64676a;height:15px;letter-spacing:-0.4px">21</div>
<div class="a" style="left:385px;top:418px;width:18px;text-align:right;font-family:'Liberation Mono',monospace;font-size:12.3px;line-height:15px;color:#64676a;height:15px;letter-spacing:-0.4px">22</div>
<div class="a" style="left:385px;top:433px;width:18px;text-align:right;font-family:'Liberation Mono',monospace;font-size:12.3px;line-height:15px;color:#64676a;height:15px;letter-spacing:-0.4px">23</div>
<div class="a" style="left:385px;top:448px;width:18px;text-align:right;font-family:'Liberation Mono',monospace;font-size:12.3px;line-height:15px;color:#64676a;height:15px;letter-spacing:-0.4px">24</div>
<div class="a" style="left:385px;top:463px;width:18px;text-align:right;font-family:'Liberation Mono',monospace;font-size:12.3px;line-height:15px;color:#64676a;height:15px;letter-spacing:-0.4px">25</div>
<div class="a" style="left:385px;top:478px;width:18px;text-align:right;font-family:'Liberation Mono',monospace;font-size:12.3px;line-height:15px;color:#64676a;height:15px;letter-spacing:-0.4px">26</div>
<div class="a" style="left:385px;top:493px;width:18px;text-align:right;font-family:'Liberation Mono',monospace;font-size:12.3px;line-height:15px;color:#64676a;height:15px;letter-spacing:-0.4px">27</div>
<div class="a" style="left:385px;top:508px;width:18px;text-align:right;font-family:'Liberation Mono',monospace;font-size:12.3px;line-height:15px;color:#64676a;height:15px;letter-spacing:-0.4px">28</div>
<div class="a" style="left:385px;top:523px;width:18px;text-align:right;font-family:'Liberation Mono',monospace;font-size:12.3px;line-height:15px;color:#64676a;height:15px;letter-spacing:-0.4px">29</div>
<div class="a" style="left:385px;top:538px;width:18px;text-align:right;font-family:'Liberation Mono',monospace;font-size:12.3px;line-height:15px;color:#64676a;height:15px;letter-spacing:-0.4px">30</div>
<div class="a" style="left:385px;top:553px;width:18px;text-align:right;font-family:'Liberation Mono',monospace;font-size:12.3px;line-height:15px;color:#64676a;height:15px;letter-spacing:-0.4px">31</div>
<div class="a" style="left:385px;top:568px;width:18px;text-align:right;font-family:'Liberation Mono',monospace;font-size:12.3px;line-height:15px;color:#64676a;height:15px;letter-spacing:-0.4px">32</div>
<div class="a" style="left:385px;top:583px;width:18px;text-align:right;font-family:'Liberation Mono',monospace;font-size:12.3px;line-height:15px;color:#64676a;height:15px;letter-spacing:-0.4px">33</div>
<div class="a" style="left:385px;top:598px;width:18px;text-align:right;font-family:'Liberation Mono',monospace;font-size:12.3px;line-height:15px;color:#64676a;height:15px;letter-spacing:-0.4px">34</div>
<div class="a" style="left:385px;top:613px;width:18px;text-align:right;font-family:'Liberation Mono',monospace;font-size:12.3px;line-height:15px;color:#64676a;height:15px;letter-spacing:-0.4px">35</div>
<div class="a" style="left:385px;top:628px;width:18px;text-align:right;font-family:'Liberation Mono',monospace;font-size:12.3px;line-height:15px;color:#64676a;height:15px;letter-spacing:-0.4px">36</div>
<div class="a" style="left:385px;top:643px;width:18px;text-align:right;font-family:'Liberation Mono',monospace;font-size:12.3px;line-height:15px;color:#64676a;height:15px;letter-spacing:-0.4px">37</div>
<div class="a" style="left:385px;top:658px;width:18px;text-align:right;font-family:'Liberation Mono',monospace;font-size:12.3px;line-height:15px;color:#64676a;height:15px;letter-spacing:-0.4px">38</div>
<div class="a" style="left:385px;top:673px;width:18px;text-align:right;font-family:'Liberation Mono',monospace;font-size:12.3px;line-height:15px;color:#64676a;height:15px;letter-spacing:-0.4px">39</div>
<div class="a" style="left:385px;top:688px;width:18px;text-align:right;font-family:'Liberation Mono',monospace;font-size:12.3px;line-height:15px;color:#64676a;height:15px;letter-spacing:-0.4px">40</div>
<div class="a" style="left:385px;top:703px;width:18px;text-align:right;font-family:'Liberation Mono',monospace;font-size:12.3px;line-height:15px;color:#64676a;height:15px;letter-spacing:-0.4px">41</div>
<div class="a" style="left:385px;top:718px;width:18px;text-align:right;font-family:'Liberation Mono',monospace;font-size:12.3px;line-height:15px;color:#64676a;height:15px;letter-spacing:-0.4px">42</div>
<div class="a" style="left:385px;top:733px;width:18px;text-align:right;font-family:'Liberation Mono',monospace;font-size:12.3px;line-height:15px;color:#64676a;height:15px;letter-spacing:-0.4px">43</div>
<div class="a" style="left:385px;top:748px;width:18px;text-align:right;font-family:'Liberation Mono',monospace;font-size:12.3px;line-height:15px;color:#64676a;height:15px;letter-spacing:-0.4px">44</div>
<div class="a" style="left:385px;top:763px;width:18px;text-align:right;font-family:'Liberation Mono',monospace;font-size:12.3px;line-height:15px;color:#64676a;height:15px;letter-spacing:-0.4px">45</div>
<div class="a" style="left:445.8px;top:102px;font-family:'Liberation Mono',monospace;font-size:13px;line-height:15px;color:#a9b7c6;transform-origin:0 0;transform:scaleX(0.8974);-webkit-text-stroke:0.25px currentColor"><span class="s">&#x27;use strict&#x27;</span><span class="o">;</span>

<span style="color:#629755">/**</span>
<span style="color:#629755"> * </span><span class="c" style="text-decoration:underline;font-weight:bold">@exports</span><span class="c"> policies</span>
<span style="color:#629755"> */</span>
<span class="k">const</span><span class="d"> policies = {</span>
<span class="d">  </span><span class="p">BlockAboutAddons</span><span class="d"> : {</span>
<span class="d">    </span><span class="p">description</span><span class="d"> : </span><span class="s">&#x27;Block access to the Add-ons Mananger (about:addons)&#x27;</span><span class="o">,</span>
<span class="d">    </span><span class="p">enterprise_only</span><span class="d"> : </span><span class="k">false</span><span class="o">,</span>
<span class="d">    </span><span class="p">first_available</span><span class="d"> : </span><span class="s">&#x27;60.0&#x27;</span><span class="o">,</span>
<span class="d">    </span><span class="p">is_lockable</span><span class="d"> : </span><span class="k">false</span><span class="o">,</span>
<span class="d">    </span><span class="p">type</span><span class="d"> : </span><span class="s">&#x27;boolean&#x27;</span>
<span class="d">  }</span><span class="o">,</span>

<span class="d">  </span><span class="p">BlockAboutConfig</span><span class="d"> : {</span>
<span class="d">    </span><span class="p">description</span><span class="d"> : </span><span class="s">&#x27;Block access to the about:config page&#x27;</span><span class="o">,</span>
<span class="d">    </span><span class="p">enterprise_only</span><span class="d"> : </span><span class="k">false</span><span class="o">,</span>
<span class="d">    </span><span class="p">first_available</span><span class="d"> : </span><span class="s">&#x27;60.0&#x27;</span><span class="o">,</span>
<span class="d">    </span><span class="p">is_lockable</span><span class="d"> : </span><span class="k">false</span><span class="o">,</span>
<span class="d">    </span><span class="p">type</span><span class="d"> : </span><span class="s">&#x27;boolean&#x27;</span>
<span class="d">  }</span><span class="o">,</span>

<span class="d">  </span><span class="p">BlockAboutProfiles</span><span class="d"> : {</span>
<span class="d">    </span><span class="p">description</span><span class="d"> : </span><span class="s">&#x27;Block access to the about:profiles page&#x27;</span><span class="o">,</span>
<span class="d">    </span><span class="p">enterprise_only</span><span class="d"> : </span><span class="k">true</span><span class="o">,</span>
<span class="d">    </span><span class="p">first_available</span><span class="d"> : </span><span class="s">&#x27;60.0&#x27;</span><span class="o">,</span>
<span class="d">    </span><span class="p">is_lockable</span><span class="d"> : </span><span class="k">false</span><span class="o">,</span>
<span class="d">    </span><span class="p">type</span><span class="d"> : </span><span class="s">&#x27;boolean&#x27;</span>
<span class="d">  }</span><span class="o">,</span>

<span class="d">  </span><span class="p">BlockAboutSupport</span><span class="d"> : {</span>
<span class="d">    </span><span class="p">description</span><span class="d"> : </span><span class="s">&#x27;Block access to the about:support page&#x27;</span><span class="o">,</span>
<span class="d">    </span><span class="p">enterprise_only</span><span class="d"> : </span><span class="k">false</span><span class="o">,</span>
<span class="d">    </span><span class="p">first_available</span><span class="d"> : </span><span class="s">&#x27;60.0&#x27;</span><span class="o">,</span>
<span class="d">    </span><span class="p">is_lockable</span><span class="d"> : </span><span class="k">false</span><span class="o">,</span>
<span class="d">    </span><span class="p">type</span><span class="d"> : </span><span class="s">&#x27;boolean&#x27;</span>
<span class="d">  }</span><span class="o">,</span>

<span class="d">  </span><span class="p">BlockSetDesktopBackground</span><span class="d"> : {</span>
<span class="d">    </span><span class="p">description</span><span class="d"> : </span><span class="s">&#x27;Prevent usage of the &quot;Set Image as Desktop Background&quot; feature&#x27;</span><span class="o">,</span>
<span class="d">    </span><span class="p">enterprise_only</span><span class="d"> : </span><span class="k">false</span><span class="o">,</span>
<span class="d">    </span><span class="p">first_available</span><span class="d"> : </span><span class="s">&#x27;60.0&#x27;</span><span class="o">,</span>
<span class="d">    </span><span class="p">is_lockable</span><span class="d"> : </span><span class="k">false</span><span class="o">,</span>
<span class="d">    </span><span class="p">type</span><span class="d"> : </span><span class="s">&#x27;boolean&#x27;</span>
<span class="d">  }</span><span class="o">,</span></div>
<svg class="a" style="left:436px;top:136px;" width="9" height="10" viewBox="0 0 9 10"><path d="M0.5 0.5h8v5.5l-4 3.5l-4-3.5z" fill="#313335" stroke="#6b6e71" stroke-width="1"/><path d="M2.5 4h4" stroke="#6b6e71" stroke-width="1"/></svg>
<svg class="a" style="left:436px;top:181px;" width="9" height="10" viewBox="0 0 9 10"><path d="M0.5 0.5h8v5.5l-4 3.5l-4-3.5z" fill="#313335" stroke="#6b6e71" stroke-width="1"/><path d="M2.5 4h4" stroke="#6b6e71" stroke-width="1"/></svg>
<svg class="a" style="left:436px;top:196px;" width="9" height="10" viewBox="0 0 9 10"><path d="M0.5 0.5h8v5.5l-4 3.5l-4-3.5z" fill="#313335" stroke="#6b6e71" stroke-width="1"/><path d="M2.5 4h4" stroke="#6b6e71" stroke-width="1"/></svg>
<svg class="a" style="left:436px;top:316px;" width="9" height="10" viewBox="0 0 9 10"><path d="M0.5 0.5h8v5.5l-4 3.5l-4-3.5z" fill="#313335" stroke="#6b6e71" stroke-width="1"/><path d="M2.5 4h4" stroke="#6b6e71" stroke-width="1"/></svg>
<svg class="a" style="left:436px;top:436px;" width="9" height="10" viewBox="0 0 9 10"><path d="M0.5 0.5h8v5.5l-4 3.5l-4-3.5z" fill="#313335" stroke="#6b6e71" stroke-width="1"/><path d="M2.5 4h4" stroke="#6b6e71" stroke-width="1"/></svg>
<svg class="a" style="left:436px;top:556px;" width="9" height="10" viewBox="0 0 9 10"><path d="M0.5 0.5h8v5.5l-4 3.5l-4-3.5z" fill="#313335" stroke="#6b6e71" stroke-width="1"/><path d="M2.5 4h4" stroke="#6b6e71" stroke-width="1"/></svg>
<svg class="a" style="left:436px;top:676px;" width="9" height="10" viewBox="0 0 9 10"><path d="M0.5 0.5h8v5.5l-4 3.5l-4-3.5z" fill="#313335" stroke="#6b6e71" stroke-width="1"/><path d="M2.5 4h4" stroke="#6b6e71" stroke-width="1"/></svg>
<svg class="a" style="left:436px;top:164px;" width="9" height="10" viewBox="0 0 9 10"><path d="M0.5 9.5h8v-5.5l-4-3.5l-4 3.5z" fill="#313335" stroke="#6b6e71" stroke-width="1"/><path d="M2.5 6h4" stroke="#6b6e71" stroke-width="1"/></svg>
<svg class="a" style="left:436px;top:284px;" width="9" height="10" viewBox="0 0 9 10"><path d="M0.5 9.5h8v-5.5l-4-3.5l-4 3.5z" fill="#313335" stroke="#6b6e71" stroke-width="1"/><path d="M2.5 6h4" stroke="#6b6e71" stroke-width="1"/></svg>
<svg class="a" style="left:436px;top:404px;" width="9" height="10" viewBox="0 0 9 10"><path d="M0.5 9.5h8v-5.5l-4-3.5l-4 3.5z" fill="#313335" stroke="#6b6e71" stroke-width="1"/><path d="M2.5 6h4" stroke="#6b6e71" stroke-width="1"/></svg>
<svg class="a" style="left:436px;top:524px;" width="9" height="10" viewBox="0 0 9 10"><path d="M0.5 9.5h8v-5.5l-4-3.5l-4 3.5z" fill="#313335" stroke="#6b6e71" stroke-width="1"/><path d="M2.5 6h4" stroke="#6b6e71" stroke-width="1"/></svg>
<svg class="a" style="left:436px;top:644px;" width="9" height="10" viewBox="0 0 9 10"><path d="M0.5 9.5h8v-5.5l-4-3.5l-4 3.5z" fill="#313335" stroke="#6b6e71" stroke-width="1"/><path d="M2.5 6h4" stroke="#6b6e71" stroke-width="1"/></svg>
<svg class="a" style="left:436px;top:764px;" width="9" height="10" viewBox="0 0 9 10"><path d="M0.5 9.5h8v-5.5l-4-3.5l-4 3.5z" fill="#313335" stroke="#6b6e71" stroke-width="1"/><path d="M2.5 6h4" stroke="#6b6e71" stroke-width="1"/></svg>
<svg class="a" style="left:454px;top:476px;" width="11" height="15" viewBox="0 0 11 15"><path d="M5.5 0.5a5 5 0 0 1 3 9l-0.5 1.5h-5l-0.5-1.5a5 5 0 0 1 3-9z" fill="#f2c35a"/><path d="M3.5 5l2 2l2-2M5.5 7v3" fill="none" stroke="#fbe3a0" stroke-width="0.8"/><rect x="3.2" y="11.2" width="4.6" height="1.6" fill="#9a9a9a"/><rect x="3.6" y="13" width="3.8" height="1.4" fill="#777"/></svg>
<div class="a" style="left:1409px;top:119px;width:7px;height:351px;background:#57595b;border-radius:3.5px"></div>
<svg class="a" style="left:1405px;top:102px;" width="13" height="11" viewBox="0 0 13 11"><path d="M1.2 5.5l3.8 3.8L11.8 1.8" fill="none" stroke="#5aad4e" stroke-width="2.6"/></svg>
<div class="a" style="left:1420px;top:76px;width:20px;height:724px;background:#3c3f41;"></div>
<div class="a" style="left:1420px;top:76px;width:1px;height:724px;background:#323436;"></div>
<svg class="a" style="left:1423px;top:86px;" width="14" height="14" viewBox="0 0 14 14"><ellipse cx="7" cy="2.5" rx="6.5" ry="2.3" fill="#40a6d8"/><path d="M0.5 4.5q6.5 4 13 0v2.5q-6.5 4-13 0z" fill="#40a6d8"/><path d="M0.5 9q6.5 4 13 0v2.5q-6.5 4-13 0z" fill="#40a6d8"/></svg>
<div class="a" style="left:1436px;top:104px;transform-origin:0 0;transform:rotate(90deg);font-size:11.5px;line-height:12px;color:#d4d4d4;letter-spacing:0.15px;-webkit-text-stroke:0.2px currentColor">Database</div>
<div class="a" style="left:385px;top:778px;width:1035px;height:22px;background:#2f3031;"></div>
<div class="a" style="left:385px;top:778px;width:1035px;height:1px;background:#383a3b;"></div>
<div class="a" style="left:450px;top:783.09px;font-size:12.3px;line-height:12.3px;color:#d0d2d4;font-family:'Liberation Sans',sans-serif;letter-spacing:0.226px;-webkit-text-stroke:0.2px currentColor;">policies</div>
<svg class="a" style="left:503px;top:785px;" width="5" height="8" viewBox="0 0 5 8"><path d="M0.5 0.5l3.5 3.5l-3.5 3.5" fill="none" stroke="#6c6f72" stroke-width="1"/></svg>
<div class="a" style="left:517px;top:783.09px;font-size:12.3px;line-height:12.3px;color:#d0d2d4;font-family:'Liberation Sans',sans-serif;letter-spacing:0.221px;-webkit-text-stroke:0.2px currentColor;">BlockAboutProfiles</div>
<div class="a" style="left:0px;top:801px;width:1440px;height:22px;background:#3c3f41;"></div>
<div class="a" style="left:0px;top:800px;width:1440px;height:2px;background:#4f5153;"></div>
<div class="a" style="left:0px;top:823px;width:1440px;height:1px;background:#4a4d50;"></div>
<svg class="a" style="left:31px;top:805px;" width="15" height="15" viewBox="0 0 15 15"><circle cx="4" cy="4" r="3" fill="#ccc"/><circle cx="9" cy="9" r="4" fill="#e8b06a"/><rect x="5" y="12" width="9" height="3" fill="#4a8ed8"/></svg>
<div class="a" style="left:48px;top:806.77px;font-size:11.5px;line-height:11.5px;color:#d0d0d0;font-family:'Liberation Sans',sans-serif;letter-spacing:-0.265px;-webkit-text-stroke:0.2px currentColor;"><u>6</u>: TODO</div>
<svg class="a" style="left:113px;top:805px;" width="13" height="13" viewBox="0 0 13 13"><rect x="0.5" y="0.5" width="12" height="12" fill="#1e1e1e" stroke="#888" stroke-width="1"/><path d="M3 5l2 1.5l-2 1.5M6 9h3" stroke="#ddd" stroke-width="1"/></svg>
<div class="a" style="left:131px;top:806.68px;font-size:11.6px;line-height:11.6px;color:#d0d0d0;font-family:'Liberation Sans',sans-serif;letter-spacing:-0.119px;-webkit-text-stroke:0.2px currentColor;">Terminal</div>
<svg class="a" style="left:1338px;top:804px;" width="17" height="16" viewBox="0 0 17 16"><path d="M8 1.2a7 5.8 0 1 0 3.5 10.6l3.3 2.4l-1.2-3.6A7 5.8 0 0 0 8 1.2z" fill="none" stroke="#9a9a9a" stroke-width="1.1"/></svg>
<div class="a" style="left:1358px;top:806.97px;font-size:11.5px;line-height:11.5px;color:#d0d0d0;font-family:'Liberation Sans',sans-serif;letter-spacing:-0.224px;-webkit-text-stroke:0.2px currentColor;">Event Log</div>
<div class="a" style="left:0px;top:824px;width:1440px;height:19px;background:#3c3f41;"></div>
<svg class="a" style="left:5px;top:827px;" width="14" height="13" viewBox="0 0 14 13"><rect x="0.5" y="0.5" width="13" height="11" fill="#57595b" stroke="#888" stroke-width="1"/><rect x="0" y="12" width="14" height="1" fill="#888"/></svg>
<div class="a" style="left:1250px;top:828.81px;font-size:11.8px;line-height:11.8px;color:#d6d6d6;font-family:'Liberation Sans',sans-serif;letter-spacing:-0.132px;-webkit-text-stroke:0.2px currentColor;">27:25</div>
<div class="a" style="left:1291px;top:829.32px;font-size:11.2px;line-height:11.2px;color:#d6d6d6;font-family:'Liberation Sans',sans-serif;letter-spacing:-2.071px;-webkit-text-stroke:0.2px currentColor;">LF</div>
<svg class="a" style="left:1304px;top:829px;" width="5" height="10" viewBox="0 0 5 10"><path d="M0 4l2.5-3.5L5 4zM0 6l2.5 3.5L5 6z" fill="#c8c8c8"/></svg>
<div class="a" style="left:1320px;top:828.81px;font-size:11.8px;line-height:11.8px;color:#d6d6d6;font-family:'Liberation Sans',sans-serif;letter-spacing:-0.108px;-webkit-text-stroke:0.2px currentColor;">UTF-8</div>
<svg class="a" style="left:1355px;top:829px;" width="5" height="10" viewBox="0 0 5 10"><path d="M0 4l2.5-3.5L5 4zM0 6l2.5 3.5L5 6z" fill="#c8c8c8"/></svg>
<svg class="a" style="left:1372px;top:828px;" width="10" height="11" viewBox="0 0 10 11"><path d="M2 5V3a3 3 0 0 1 5.5-1.5" fill="none" stroke="#aaa" stroke-width="1.2"/><rect x="1" y="5" width="8" height="6" fill="#aaa"/></svg>
<svg class="a" style="left:1396px;top:827px;" width="16" height="16" viewBox="0 0 16 16"><circle cx="6" cy="6" r="3.7" fill="none" stroke="#999" stroke-width="2.4" stroke-dasharray="1.6 1.2"/><text x="9" y="15" font-size="9" font-weight="bold" font-family="Liberation Sans" fill="#ddd">?</text></svg>
<svg class="a" style="left:1420px;top:827px;" width="15" height="15" viewBox="0 0 15 15"><path d="M3 6a4.5 4.5 0 0 1 9 0v2h-9z" fill="none" stroke="#999" stroke-width="1.3"/><rect x="1" y="7" width="13" height="3" fill="#999"/><path d="M4 11l3.5 3l3.5-3" fill="none" stroke="#999" stroke-width="1.2"/></svg>
<div class="a" style="left:0px;top:843px;width:1440px;height:57px;background:#1a1a1a;"></div>
<div class="a" style="left:0px;top:844px;width:38px;height:56px;background:linear-gradient(#151515,#3a3a3a 60%,#4e4e4e);"></div>
<div class="a" style="left:38px;top:844px;width:2px;height:56px;background:#2a2a2a;"></div>
<div class="a" style="left:40px;top:844px;width:1022px;height:39px;background:linear-gradient(#080808,#1f1f1f);"></div>
<div class="a" style="left:40px;top:883px;width:1022px;height:17px;background:#3b3b3b;"></div>
<div class="a" style="left:101px;top:883px;width:182px;height:17px;background:#4a4a4a;"></div>
<div class="a" style="left:284px;top:883px;width:778px;height:17px;background:linear-gradient(90deg,#444,#555);"></div>
<div class="a" style="left:57.5px;top:885.52px;font-size:11.2px;line-height:11.2px;color:#d6d6d6;font-family:'Liberation Sans',sans-serif;letter-spacing:-0.549px;-webkit-text-stroke:0.2px currentColor;">100%</div>
<div class="a" style="left:132.5px;top:885.69px;font-size:11px;line-height:11px;color:#d6d6d6;font-family:'Liberation Sans',sans-serif;letter-spacing:-0.206px;-webkit-text-stroke:0.2px currentColor;">Dok: 1,56 MB/2,08 MB</div>
<svg class="a" style="left:274px;top:886px;" width="5" height="10" viewBox="0 0 5 10"><path d="M0.5 0.5l3.5 4.5l-3.5 4.5" fill="none" stroke="#cfcfcf" stroke-width="1.1"/></svg>
<div class="a" style="left:1062px;top:843px;width:378px;height:57px;background:#262626;border-radius:3px 0 0 0"></div>
<div class="a" style="left:1062px;top:844px;width:33px;height:56px;background:linear-gradient(#0c0c0c,#1c1c1c 69%,#3c3c3c 69%,#4a4a4a);"></div>
<div class="a" style="left:1095px;top:844px;width:16px;height:56px;background:linear-gradient(#1e1e1e,#383838 69%,#4e4e4e 69%,#555);"></div>
<div class="a" style="left:1111px;top:843px;width:2px;height:57px;background:#2a2a2a;"></div>
<div class="a" style="left:1113px;top:844px;width:38px;height:56px;background:linear-gradient(#161616,#4c4c4c);"></div>
<div class="a" style="left:1151px;top:844px;width:3px;height:56px;background:#262626;"></div>
<div class="a" style="left:1154px;top:844px;width:286px;height:30px;background:linear-gradient(#0b0b0b,#2f2f2f);"></div>
<div class="a" style="left:1154px;top:874px;width:286px;height:26px;background:#464646;"></div>
<div class="a" style="left:1154px;top:874px;width:286px;height:1px;background:#555;"></div>
<svg class="a" style="left:1236px;top:882px;" width="14" height="10" viewBox="0 0 14 10"><rect x="1" y="2" width="7" height="6" rx="3" fill="none" stroke="#8a8a8a" stroke-width="1.5"/><rect x="6" y="2" width="7" height="6" rx="3" fill="none" stroke="#8a8a8a" stroke-width="1.5"/></svg>
<div class="a" style="left:1263px;top:881.50px;font-size:15px;line-height:15px;color:#c8c8c8;font-family:'Liberation Serif',serif;-webkit-text-stroke:0.2px currentColor;font-style:italic">fx</div>
<svg class="a" style="left:1290px;top:880px;" width="14" height="12" viewBox="0 0 14 12"><rect x="0" y="0" width="13" height="11" fill="#d0d0d0"/><circle cx="6.5" cy="5.5" r="3" fill="#464646"/></svg>
<svg class="a" style="left:1319px;top:880px;" width="14" height="13" viewBox="0 0 14 13"><circle cx="6" cy="6" r="5" fill="#464646" stroke="#d0d0d0" stroke-width="1.5"/><path d="M2.5 9.5l7-7A5 5 0 0 1 2.5 9.5z" fill="#d0d0d0"/></svg>
<svg class="a" style="left:1345px;top:880px;" width="15" height="12" viewBox="0 0 15 12"><path d="M0 1h5l1 1.5h8v9h-14z" fill="#d0d0d0"/></svg>
<svg class="a" style="left:1373px;top:880px;" width="12" height="13" viewBox="0 0 12 13"><path d="M0.7 0.7h10.6v8l-3.5 3.5h-7.1z" fill="none" stroke="#d0d0d0" stroke-width="1.4"/><path d="M3 3h6v4h-4z" fill="#d0d0d0"/></svg>
<svg class="a" style="left:1400px;top:880px;" width="11" height="13" viewBox="0 0 11 13"><rect x="1.5" y="3" width="8" height="9.5" fill="none" stroke="#8a8a8a" stroke-width="1.2"/><path d="M0 2h11M4 0.5h3M4 5v6M6.5 5v6" stroke="#8a8a8a" stroke-width="1"/></svg>
<div class="a" style="left:377px;top:844px;width:686px;height:56px;background:#696869;border-radius:5px 5px 0 0"></div>
<div class="a" style="left:0px;top:843px;width:1440px;height:1px;background:#2b2b2b;"></div>
<svg class="a" style="left:385px;top:853px;" width="37" height="35" viewBox="0 0 37 35"><defs><linearGradient id="fdg" x1="0" y1="0" x2="0" y2="1"><stop offset="0" stop-color="#22c6fa"/><stop offset="1" stop-color="#1a74e6"/></linearGradient></defs><rect x="0" y="0" width="37" height="35" rx="3" fill="#eef2f6"/><path d="M3 0h18c-3 5-5 11-5 17h4c0 6 0 12 2 18h-19a3 3 0 0 1-3-3v-29a3 3 0 0 1 3-3z" fill="url(#fdg)"/><rect x="10" y="9" width="2" height="5" fill="#111"/><rect x="25" y="9" width="2" height="5" fill="#111"/><path d="M7 22q11 9 23 0" fill="none" stroke="#111" stroke-width="1.6"/></svg>
<svg class="a" style="left:430px;top:851px;" width="40" height="40" viewBox="0 0 40 40"><defs><linearGradient id="lpg" x1="0" y1="0" x2="0" y2="1"><stop offset="0" stop-color="#d0d4d8"/><stop offset="1" stop-color="#7a7c80"/></linearGradient></defs><circle cx="20" cy="20" r="19.5" fill="#e8e8e8"/><circle cx="20" cy="20" r="18.3" fill="url(#lpg)"/><path d="M31 8C24 9 18 13 14 19l-4 2l-4 5l6-1l4 4l-1 6l5-4l2-4c6-4 10-10 11-17z" fill="#3f4246"/><circle cx="24.5" cy="15.5" r="2.2" fill="#b8bcc0"/><path d="M10 27l-4 6l6-4z" fill="#3f4246"/></svg>
<svg class="a" style="left:478px;top:849px;" width="44" height="42" viewBox="0 0 44 42"><defs><linearGradient id="asg" x1="0" y1="0" x2="0" y2="1"><stop offset="0" stop-color="#24b0fb"/><stop offset="1" stop-color="#1566e0"/></linearGradient></defs><circle cx="19.5" cy="22" r="19.5" fill="#f4efe6"/><circle cx="19.5" cy="22" r="18.2" fill="url(#asg)"/><path d="M11 31.5l10.5-18M28 31.5l-10.5-18M8 25h23" stroke="#fff" stroke-width="2.8" stroke-linecap="round"/><circle cx="34" cy="8" r="7.5" fill="#e8423a"/><text x="31.2" y="12" font-size="10.5" font-weight="bold" font-family="Liberation Sans" fill="#fff">1</text></svg>
<svg class="a" style="left:523px;top:849px;" width="43" height="41" viewBox="0 0 43 41"><rect x="0.5" y="0.5" width="42" height="40" fill="#0b2027"/><rect x="1" y="1" width="41" height="39" fill="none" stroke="#31c5f0" stroke-width="1.5"/><text x="8" y="29" font-size="23" font-weight="bold" font-family="Liberation Sans" fill="#31c5f0" textLength="27">Ps</text></svg>
<svg class="a" style="left:569px;top:848px;" width="45" height="45" viewBox="0 0 45 45"><circle cx="22.5" cy="22.5" r="22" fill="#2d75a8"/><path d="M8 26c0-9 6-14 14-14s15 5 15 12c0 4-2 6-3 6v8h-5v-6h-2v6h-5v-6h-3v6h-5v-6c-3-1-6-3-6-6z" fill="#fff"/><path d="M26 16l3 5l4-3" fill="none" stroke="#2d75a8" stroke-width="1.5"/></svg>
<svg class="a" style="left:618px;top:851px;" width="41" height="41" viewBox="0 0 41 41"><circle cx="20.5" cy="20.5" r="20" fill="#8873d3"/><circle cx="20.5" cy="17" r="7" fill="#fff"/><circle cx="20.5" cy="17" r="3" fill="#8873d3"/><rect x="18.5" y="22" width="4" height="9" fill="#fff"/></svg>
<svg class="a" style="left:664px;top:849px;" width="43" height="42" viewBox="0 0 43 42"><path d="M3 3l20-3l18 6l2 26l-15 10l-16-5l-12-12z" fill="#b345f1"/><path d="M20 0l21 5l2 20z" fill="#765af8"/><path d="M0 18l12-15l8 30z" fill="#ff318c"/><rect x="9" y="9" width="25" height="25" fill="#000"/><text x="11" y="24" font-size="11" font-weight="bold" font-family="Liberation Sans" fill="#fff">PS</text><rect x="12" y="28" width="8" height="2" fill="#fff"/></svg>
<svg class="a" style="left:712px;top:850px;" width="41" height="41" viewBox="0 0 41 41"><defs><linearGradient id="itg" x1="0" y1="0" x2="1" y2="1"><stop offset="0" stop-color="#f86ca0"/><stop offset="1" stop-color="#5a8df8"/></linearGradient></defs><circle cx="20.5" cy="20.5" r="20" fill="url(#itg)"/><circle cx="20.5" cy="20.5" r="17.5" fill="#fafafa"/><path d="M16 27V12l12-3v15" fill="none" stroke="#e9508f" stroke-width="2.4"/><circle cx="13.5" cy="27" r="3.2" fill="#a36bd8"/><circle cx="25.5" cy="24.5" r="3.2" fill="#6e84ea"/></svg>
<svg class="a" style="left:761px;top:851px;" width="37" height="39" viewBox="0 0 37 39"><ellipse cx="18.5" cy="19.5" rx="18" ry="19" fill="#e9e1d2"/><ellipse cx="15" cy="14" rx="10" ry="9" fill="#f5f0e6"/><path d="M8 14l4 3l-2 5M12 17l5-2" stroke="#333" stroke-width="0.9" fill="none"/></svg>
<svg class="a" style="left:804px;top:847px;" width="44" height="44" viewBox="0 0 44 44"><defs><linearGradient id="fna" x1="0" y1="0" x2="0" y2="1"><stop offset="0" stop-color="#1a48c0"/><stop offset="1" stop-color="#14236e"/></linearGradient><linearGradient id="fnb" x1="0" y1="0" x2="1" y2="1"><stop offset="0" stop-color="#b64df0"/><stop offset="1" stop-color="#5f6cf5"/></linearGradient><linearGradient id="fnc" x1="0" y1="0" x2="0" y2="1"><stop offset="0" stop-color="#3ff0a8"/><stop offset="1" stop-color="#18a8e8"/></linearGradient></defs><circle cx="23" cy="22" r="15" fill="url(#fna)"/><path d="M7 9C2 15 1 27 7 35C13 43 29 45 37 36C41 31 43 25 42 19C39 28 31 34 22 32C14 30 11 22 16 15C12 16 9 13 9 7z" fill="url(#fnb)"/><path d="M29 1C38 5 44 14 42 26C40 19 35 14 29 12C27 8 27 4 29 1z" fill="url(#fnc)"/><path d="M14 26C18 30 24 31 29 28C25 33 17 33 14 26z" fill="url(#fnb)"/></svg>
<svg class="a" style="left:856px;top:848px;" width="36" height="43" viewBox="0 0 36 43"><path d="M2 6l24-5l8 38l-24 4z" fill="#f4f4f4" stroke="#cfcfcf" stroke-width="0.6"/><path d="M6 12l20-4M7 16l20-4M8 20l20-4M9 24l20-4M10 28l20-4M11 32l20-4" stroke="#b8b8c8" stroke-width="0.6"/><path d="M31 2l3 1l-12 36l-2-1z" fill="#9aa8b8"/></svg>
<svg class="a" style="left:901px;top:853px;" width="39" height="34" viewBox="0 0 39 34"><rect x="0.5" y="0.5" width="38" height="33" rx="2.5" fill="#2a2a2a" stroke="#8a8a8a" stroke-width="1"/><rect x="1.5" y="1.5" width="36" height="31" rx="2" fill="#1d1d1d"/><text x="3.5" y="15" font-size="12" font-weight="bold" font-family="Liberation Sans" fill="#3ec93e">$</text><rect x="12" y="4.5" width="3.5" height="10" fill="#3ec93e"/></svg>
<svg class="a" style="left:945px;top:847px;" width="44" height="44" viewBox="0 0 44 44"><defs><linearGradient id="ffa" x1="0" y1="0" x2="0" y2="1"><stop offset="0" stop-color="#3aa0f0"/><stop offset="1" stop-color="#3030a8"/></linearGradient><linearGradient id="ffb" x1="0" y1="0" x2="1" y2="1"><stop offset="0" stop-color="#ff3d3d"/><stop offset="1" stop-color="#ffa02a"/></linearGradient><linearGradient id="ffc" x1="0" y1="0" x2="0" y2="1"><stop offset="0" stop-color="#ffe14a"/><stop offset="1" stop-color="#ff9a1e"/></linearGradient></defs><circle cx="23" cy="22" r="15" fill="url(#ffa)"/><path d="M7 9C2 15 1 27 7 35C13 43 29 45 37 36C41 31 43 25 42 19C39 28 31 34 22 32C14 30 11 22 16 15C12 16 9 13 9 7z" fill="url(#ffb)"/><path d="M29 1C38 5 44 14 42 26C40 19 35 14 29 12C27 8 27 4 29 1z" fill="url(#ffc)"/><path d="M14 26C18 30 24 31 29 28C25 33 17 33 14 26z" fill="url(#ffb)"/></svg>
<div class="a" style="left:1002px;top:851px;width:1px;height:42px;background:#4a4a4a;"></div>
<svg class="a" style="left:1020px;top:849px;" width="33" height="42" viewBox="0 0 33 42"><path d="M1 5h31l-4 36h-23z" fill="#e0e0e0" opacity="0.9"/><ellipse cx="16.5" cy="5" rx="15.5" ry="4" fill="#c8c8c8"/><path d="M6 4l4-3l5 2l6-2l6 3" fill="none" stroke="#777" stroke-width="1.5"/><path d="M6 10l3 28M12 10l1 29M21 10l-1 29M27 10l-3 28" stroke="#c0c0c0" stroke-width="1"/></svg>
<div class="a" style="left:401px;top:893.5px;width:4px;height:4px;background:#0a0a0a;border-radius:50%"></div>
<div class="a" style="left:542px;top:893.5px;width:4px;height:4px;background:#0a0a0a;border-radius:50%"></div>
<div class="a" style="left:635px;top:893.5px;width:4px;height:4px;background:#0a0a0a;border-radius:50%"></div>
<div class="a" style="left:683px;top:893.5px;width:4px;height:4px;background:#0a0a0a;border-radius:50%"></div>
<div class="a" style="left:777px;top:893.5px;width:4px;height:4px;background:#0a0a0a;border-radius:50%"></div>
<div class="a" style="left:824px;top:893.5px;width:4px;height:4px;background:#0a0a0a;border-radius:50%"></div>
<div class="a" style="left:871px;top:893.5px;width:4px;height:4px;background:#0a0a0a;border-radius:50%"></div>
<div class="a" style="left:918px;top:893.5px;width:4px;height:4px;background:#0a0a0a;border-radius:50%"></div>
<div class="a" style="left:965px;top:893.5px;width:4px;height:4px;background:#0a0a0a;border-radius:50%"></div>
</body></html>
